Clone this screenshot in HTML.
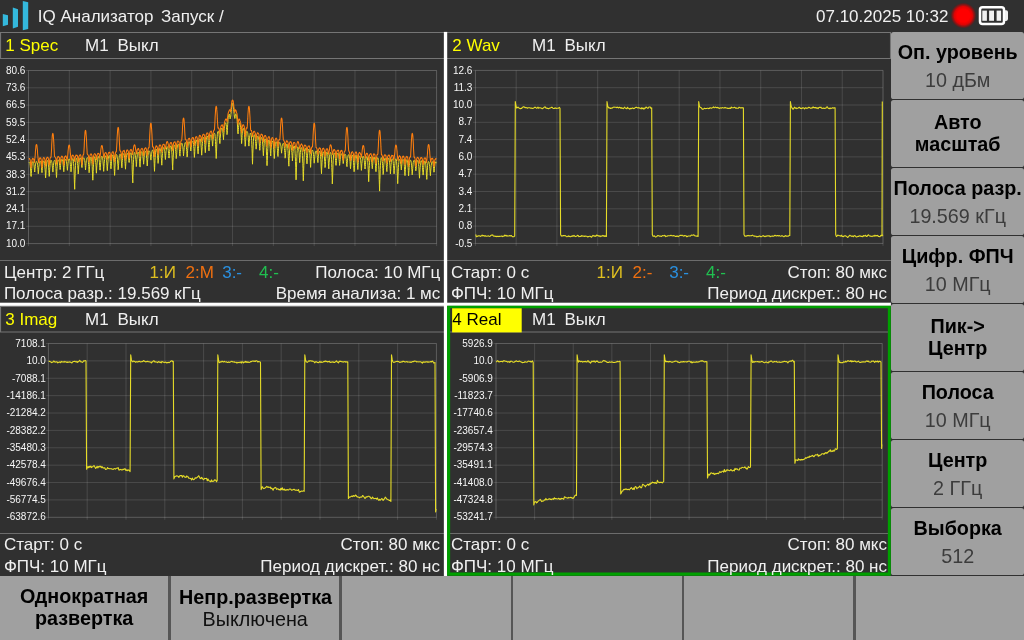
<!DOCTYPE html>
<html lang="ru"><head><meta charset="utf-8"><title>IQ Анализатор</title>
<style>
html,body{margin:0;padding:0;}
body{width:1024px;height:640px;background:#303030;overflow:hidden;position:relative;font-family:"Liberation Sans",sans-serif;color:#f0f0f0;}
div{position:absolute;box-sizing:border-box;white-space:nowrap;}
.plots{position:absolute;left:0;top:0;}
#wrap{left:0;top:0;width:1024px;height:640px;will-change:transform;}
.yl{font-size:10px;line-height:12px;text-align:right;color:#f6f6f6;}
.sb{left:891.1px;width:133.3px;height:66.3px;background:#a0a0a0;border-radius:2.6px;}
.bb{top:575.8px;width:168.6px;height:65px;background:#a0a0a0;}
.bbg{left:0;top:575.8px;width:1024px;height:65px;background:#565656;}
</style></head><body><div id="wrap">
<svg style="position:absolute;left:0;top:0" width="36" height="32" viewBox="0 0 36 32"><g fill="#34b8dc">
<polygon points="2.8,14 8,15.3 8,24.7 2.8,26.3"/><polygon points="12.8,7.5 18,9.2 18,26.8 12.8,28.5"/><polygon points="22.8,1 28.2,2.3 28.2,29 22.8,30.3"/></g></svg>
<div style="font-size:17px;line-height:22px;top:5.50px;color:#f0f0f0;left:37.80px;">IQ Анализатор</div>
<div style="font-size:17px;line-height:22px;top:5.50px;color:#f0f0f0;left:161.00px;">Запуск /</div>
<div style="font-size:17px;line-height:22px;top:5.50px;color:#f0f0f0;left:816.00px;">07.10.2025 10:32</div>
<svg style="position:absolute;left:940px;top:0" width="84" height="32" viewBox="940 0 84 32">
<defs><radialGradient id="rg"><stop offset="0" stop-color="#ff0000"/><stop offset="0.5" stop-color="#ff0000"/><stop offset="0.7" stop-color="#f00000" stop-opacity="0.9"/><stop offset="0.85" stop-color="#d00000" stop-opacity="0.5"/><stop offset="1" stop-color="#a00000" stop-opacity="0"/></radialGradient></defs>
<circle cx="963.4" cy="15.6" r="13" fill="url(#rg)"/>
<rect x="980" y="7.2" width="24" height="16.8" rx="2.5" fill="none" stroke="#fff" stroke-width="2.5"/>
<path d="M1005 10.3h1.2a1.8 1.8 0 0 1 1.8 1.8v7a1.8 1.8 0 0 1 -1.8 1.8h-1.2z" fill="#f0f0f0"/>
<rect x="982.3" y="10.6" width="4.6" height="10.2" fill="#f0f0f0"/><rect x="989.1" y="10.6" width="4.9" height="10.2" fill="#f0f0f0"/><rect x="996.6" y="10.6" width="4.5" height="10.2" fill="#f0f0f0"/>
</svg>
<svg class="plots" width="1024" height="640" viewBox="0 0 1024 640"><g fill="none" stroke="#757575" stroke-width="1.1"><path d="M446 32.5H0.55V58.5H446"/><path d="M446 32.5H890.5V58.5H446"/><path d="M446 306.5H0.55V332H446"/><path d="M889 332H450"/></g><g fill="none" stroke="#6c6c6c" stroke-width="1"><path d="M0 260.5H444M447 260.5H891M0 533.5H444M450 533.5H888"/></g><rect x="443.85" y="31.9" width="3.35" height="544.1" fill="#fff"/><rect x="0" y="302.7" width="890.9" height="3.15" fill="#fff"/><path fill="#00a000" fill-rule="evenodd" d="M447.1 305.85H890.8V575.7H447.1Z M450.15 308.3V572.6H887.85V308.3Z"/><rect x="452.1" y="308.3" width="69.6" height="24.1" fill="#ffff00"/></svg>
<svg class="plots" width="1024" height="640" viewBox="0 0 1024 640"><g stroke="#ffffff" stroke-opacity="0.125" stroke-width="1" fill="none"><line x1="28.50" y1="70.50" x2="28.50" y2="246.10"/><line x1="69.31" y1="70.50" x2="69.31" y2="246.10"/><line x1="110.12" y1="70.50" x2="110.12" y2="246.10"/><line x1="150.93" y1="70.50" x2="150.93" y2="246.10"/><line x1="191.74" y1="70.50" x2="191.74" y2="246.10"/><line x1="232.55" y1="70.50" x2="232.55" y2="246.10"/><line x1="273.36" y1="70.50" x2="273.36" y2="246.10"/><line x1="314.17" y1="70.50" x2="314.17" y2="246.10"/><line x1="354.98" y1="70.50" x2="354.98" y2="246.10"/><line x1="395.79" y1="70.50" x2="395.79" y2="246.10"/><line x1="436.60" y1="70.50" x2="436.60" y2="246.10"/><line x1="26.00" y1="70.50" x2="436.60" y2="70.50"/><line x1="26.00" y1="87.81" x2="436.60" y2="87.81"/><line x1="26.00" y1="105.12" x2="436.60" y2="105.12"/><line x1="26.00" y1="122.43" x2="436.60" y2="122.43"/><line x1="26.00" y1="139.74" x2="436.60" y2="139.74"/><line x1="26.00" y1="157.05" x2="436.60" y2="157.05"/><line x1="26.00" y1="174.36" x2="436.60" y2="174.36"/><line x1="26.00" y1="191.67" x2="436.60" y2="191.67"/><line x1="26.00" y1="208.98" x2="436.60" y2="208.98"/><line x1="26.00" y1="226.29" x2="436.60" y2="226.29"/><line x1="26.00" y1="243.60" x2="436.60" y2="243.60"/><rect x="28.50" y="70.50" width="408.10" height="173.10" stroke-opacity="0.11"/></g><polyline points="28.8,162.5 29.0,162.3 29.1,162.1 29.3,162.1 29.5,162.3 29.6,162.5 29.8,162.7 30.0,163.7 30.2,165.3 30.3,166.7 30.5,168.9 30.7,171.1 30.8,173.9 31.0,176.4 31.2,176.4 31.3,173.6 31.5,170.8 31.7,168.6 31.9,166.6 32.0,165.0 32.2,163.4 32.4,162.9 32.5,162.2 32.7,161.7 32.9,161.9 33.0,161.7 33.2,161.8 33.4,162.2 33.6,162.7 33.7,163.3 33.9,164.7 34.1,165.9 34.2,167.2 34.4,169.2 34.6,170.7 34.7,172.0 34.9,170.3 35.1,168.2 35.3,166.5 35.4,164.9 35.6,163.9 35.8,162.8 35.9,162.4 36.1,161.6 36.3,161.6 36.4,161.7 36.6,161.5 36.8,161.5 37.0,161.7 37.1,162.6 37.3,162.9 37.5,164.2 37.6,165.5 37.8,167.3 38.0,169.1 38.1,171.4 38.3,173.7 38.5,172.2 38.7,169.8 38.8,167.8 39.0,166.2 39.2,164.6 39.3,163.5 39.5,162.6 39.7,161.7 39.8,161.6 40.0,161.4 40.2,161.2 40.4,161.4 40.5,161.3 40.7,161.6 40.9,162.7 41.0,163.7 41.2,164.7 41.4,166.2 41.5,167.9 41.7,170.3 41.9,172.3 42.0,172.7 42.2,170.5 42.4,168.2 42.6,166.6 42.7,164.7 42.9,163.6 43.1,162.3 43.2,161.7 43.4,161.4 43.6,160.9 43.7,161.1 43.9,161.2 44.1,161.0 44.3,161.6 44.4,162.1 44.6,163.5 44.8,165.2 44.9,167.0 45.1,169.8 45.3,172.1 45.4,175.3 45.6,177.9 45.8,174.8 46.0,172.0 46.1,169.1 46.3,166.9 46.5,164.9 46.6,163.2 46.8,161.9 47.0,161.4 47.1,161.1 47.3,160.6 47.5,160.5 47.7,160.9 47.8,161.1 48.0,161.6 48.2,162.5 48.3,164.1 48.5,166.1 48.7,167.8 48.8,170.6 49.0,173.2 49.2,176.4 49.4,175.1 49.5,172.2 49.7,169.2 49.9,167.2 50.0,165.2 50.2,163.3 50.4,162.0 50.5,161.4 50.7,160.5 50.9,160.2 51.1,160.5 51.2,160.4 51.4,160.6 51.6,160.7 51.7,161.7 51.9,162.6 52.1,163.5 52.2,165.2 52.4,167.1 52.6,168.8 52.8,171.3 52.9,172.1 53.1,169.8 53.3,167.5 53.4,165.6 53.6,164.0 53.8,162.9 53.9,161.5 54.1,161.0 54.3,160.5 54.4,160.4 54.6,160.3 54.8,160.1 55.0,160.3 55.1,160.8 55.3,161.5 55.5,162.5 55.6,164.0 55.8,166.2 56.0,168.5 56.1,171.2 56.3,174.3 56.5,177.5 56.7,174.7 56.8,171.3 57.0,168.5 57.2,166.4 57.3,164.0 57.5,162.7 57.7,161.3 57.8,160.4 58.0,160.1 58.2,159.9 58.4,160.0 58.5,160.1 58.7,160.0 58.9,160.3 59.0,161.0 59.2,161.6 59.4,162.9 59.5,164.0 59.7,165.7 59.9,167.7 60.1,169.6 60.2,169.1 60.4,167.4 60.6,165.3 60.7,163.8 60.9,162.6 61.1,161.5 61.2,160.8 61.4,159.9 61.6,159.9 61.8,159.4 61.9,159.4 62.1,159.4 62.3,159.8 62.4,159.8 62.6,160.9 62.8,161.5 62.9,162.6 63.1,164.1 63.3,166.0 63.5,167.9 63.6,170.4 63.8,171.7 64.0,169.3 64.1,167.3 64.3,165.2 64.5,163.3 64.6,161.9 64.8,161.0 65.0,160.1 65.2,159.6 65.3,159.4 65.5,159.4 65.7,159.3 65.8,159.5 66.0,159.6 66.2,159.8 66.3,161.0 66.5,161.6 66.7,163.0 66.8,164.3 67.0,166.3 67.2,168.4 67.4,170.3 67.5,169.1 67.7,166.7 67.9,165.2 68.0,163.5 68.2,161.8 68.4,160.7 68.5,159.9 68.7,159.5 68.9,159.0 69.1,159.3 69.2,158.8 69.4,159.2 69.6,159.2 69.7,159.5 69.9,160.6 70.1,161.6 70.2,162.8 70.4,164.6 70.6,166.6 70.8,168.9 70.9,171.7 71.1,171.8 71.3,169.0 71.4,166.7 71.6,165.0 71.8,162.9 71.9,161.5 72.1,160.2 72.3,159.3 72.5,159.1 72.6,158.7 72.8,158.8 73.0,158.6 73.1,159.0 73.3,160.0 73.5,161.5 73.6,163.4 73.8,166.5 74.0,170.1 74.2,174.5 74.3,179.5 74.5,185.0 74.7,189.3 74.8,183.4 75.0,177.9 75.2,173.2 75.3,169.1 75.5,165.5 75.7,162.7 75.9,160.8 76.0,159.4 76.2,158.5 76.4,158.6 76.5,158.4 76.7,158.4 76.9,158.8 77.0,159.5 77.2,160.2 77.4,161.8 77.6,163.6 77.7,165.5 77.9,168.1 78.1,171.0 78.2,173.9 78.4,172.3 78.6,169.2 78.7,167.0 78.9,164.7 79.1,162.7 79.2,160.8 79.4,159.8 79.6,159.1 79.8,158.4 79.9,158.4 80.1,158.2 80.3,157.9 80.4,158.2 80.6,158.9 80.8,159.4 80.9,160.1 81.1,160.8 81.3,162.0 81.5,163.7 81.6,165.0 81.8,167.3 82.0,167.6 82.1,165.8 82.3,164.0 82.5,162.4 82.6,161.3 82.8,159.9 83.0,159.2 83.2,158.5 83.3,158.3 83.5,158.1 83.7,157.9 83.8,157.8 84.0,157.8 84.2,158.0 84.3,158.7 84.5,159.3 84.7,160.5 84.9,162.2 85.0,163.7 85.2,165.4 85.4,167.7 85.5,170.0 85.7,167.6 85.9,165.3 86.0,163.7 86.2,162.0 86.4,160.6 86.6,159.4 86.7,158.5 86.9,158.0 87.1,157.8 87.2,157.6 87.4,157.6 87.6,157.8 87.7,157.8 87.9,158.3 88.1,159.3 88.3,160.8 88.4,162.2 88.6,164.4 88.8,166.7 88.9,169.4 89.1,172.7 89.3,171.7 89.4,169.1 89.6,166.2 89.8,164.1 90.0,161.7 90.1,160.2 90.3,158.9 90.5,158.3 90.6,157.5 90.8,157.4 91.0,157.2 91.1,157.1 91.3,157.9 91.5,158.5 91.6,159.7 91.8,161.6 92.0,163.8 92.2,166.3 92.3,169.9 92.5,173.9 92.7,178.4 92.8,180.2 93.0,176.1 93.2,171.6 93.3,167.9 93.5,164.8 93.7,162.2 93.9,160.4 94.0,158.9 94.2,157.6 94.4,157.5 94.5,156.8 94.7,156.8 94.9,157.1 95.0,157.4 95.2,158.4 95.4,159.0 95.6,160.9 95.7,162.4 95.9,164.8 96.1,167.0 96.2,170.2 96.4,173.2 96.6,170.7 96.7,168.0 96.9,165.3 97.1,163.0 97.3,161.0 97.4,159.6 97.6,158.3 97.8,157.5 97.9,157.0 98.1,157.0 98.3,156.5 98.4,156.9 98.6,156.9 98.8,157.6 99.0,158.2 99.1,159.4 99.3,161.1 99.5,162.8 99.6,165.2 99.8,167.6 100.0,170.0 100.1,170.2 100.3,167.3 100.5,164.9 100.7,162.7 100.8,160.8 101.0,159.2 101.2,157.9 101.3,157.3 101.5,156.9 101.7,156.3 101.8,156.4 102.0,156.2 102.2,156.6 102.4,156.9 102.5,157.6 102.7,158.8 102.9,160.2 103.0,161.9 103.2,164.0 103.4,166.7 103.5,169.2 103.7,171.4 103.9,168.2 104.0,166.0 104.2,163.6 104.4,161.1 104.6,159.5 104.7,158.0 104.9,157.1 105.1,156.7 105.2,156.2 105.4,155.8 105.6,156.2 105.7,156.1 105.9,156.1 106.1,156.9 106.3,157.7 106.4,159.4 106.6,160.8 106.8,162.9 106.9,165.5 107.1,168.0 107.3,170.6 107.4,169.0 107.6,166.2 107.8,163.9 108.0,161.7 108.1,159.7 108.3,158.1 108.5,156.9 108.6,156.1 108.8,155.9 109.0,155.7 109.1,155.5 109.3,155.7 109.5,155.7 109.7,156.0 109.8,156.7 110.0,158.2 110.2,159.7 110.3,161.5 110.5,163.3 110.7,165.8 110.8,168.4 111.0,168.9 111.2,166.3 111.4,163.9 111.5,161.4 111.7,159.8 111.9,158.1 112.0,157.1 112.2,156.3 112.4,155.7 112.5,155.3 112.7,155.3 112.9,154.9 113.1,155.1 113.2,155.8 113.4,156.8 113.6,158.3 113.7,160.1 113.9,162.1 114.1,165.2 114.2,168.3 114.4,171.7 114.6,175.4 114.8,171.7 114.9,167.8 115.1,165.0 115.3,161.8 115.4,159.4 115.6,157.7 115.8,156.5 115.9,155.6 116.1,155.1 116.3,154.6 116.4,154.6 116.6,154.6 116.8,154.9 117.0,155.6 117.1,156.9 117.3,158.0 117.5,159.6 117.6,162.0 117.8,164.2 118.0,166.7 118.1,169.7 118.3,168.9 118.5,165.8 118.7,163.2 118.8,160.8 119.0,158.9 119.2,157.5 119.3,155.8 119.5,155.3 119.7,154.6 119.8,154.2 120.0,154.2 120.2,154.2 120.4,154.4 120.5,154.8 120.7,155.8 120.9,156.6 121.0,157.9 121.2,160.0 121.4,161.9 121.5,163.9 121.7,166.7 121.9,167.8 122.1,164.9 122.2,162.5 122.4,160.3 122.6,158.3 122.7,157.0 122.9,155.5 123.1,154.8 123.2,154.3 123.4,154.0 123.6,154.0 123.8,153.6 123.9,153.8 124.1,154.4 124.3,154.9 124.4,155.8 124.6,157.2 124.8,158.9 124.9,161.4 125.1,163.5 125.3,166.3 125.5,169.2 125.6,166.8 125.8,163.9 126.0,161.4 126.1,159.3 126.3,157.3 126.5,155.7 126.6,155.1 126.8,154.3 127.0,153.6 127.2,153.6 127.3,153.6 127.5,153.4 127.7,153.5 127.8,153.8 128.0,154.7 128.2,155.5 128.3,156.3 128.5,157.8 128.7,159.1 128.8,160.7 129.0,162.5 129.2,162.4 129.4,160.5 129.5,159.0 129.7,157.5 129.9,156.1 130.0,155.0 130.2,154.1 130.4,153.8 130.5,153.3 130.7,153.1 130.9,152.8 131.1,153.3 131.2,153.3 131.4,154.3 131.6,155.6 131.7,158.2 131.9,161.1 132.1,164.5 132.2,169.1 132.4,174.2 132.6,179.6 132.8,182.9 132.9,177.1 133.1,171.9 133.3,167.1 133.4,162.9 133.6,159.4 133.8,156.7 133.9,155.1 134.1,153.7 134.3,152.7 134.5,152.6 134.6,152.8 134.8,152.6 135.0,153.0 135.1,153.4 135.3,154.6 135.5,155.6 135.6,157.1 135.8,159.2 136.0,161.2 136.2,163.6 136.3,166.6 136.5,164.9 136.7,161.9 136.8,159.6 137.0,157.9 137.2,156.0 137.3,154.7 137.5,153.5 137.7,152.6 137.9,152.2 138.0,152.2 138.2,152.3 138.4,152.4 138.5,152.4 138.7,152.9 138.9,153.9 139.0,155.2 139.2,156.8 139.4,158.8 139.6,161.1 139.7,163.9 139.9,166.6 140.1,167.1 140.2,164.0 140.4,161.1 140.6,159.0 140.7,156.6 140.9,155.1 141.1,153.8 141.2,152.8 141.4,152.2 141.6,152.1 141.8,151.6 141.9,151.8 142.1,152.0 142.3,152.4 142.4,152.6 142.6,153.4 142.8,154.9 142.9,156.3 143.1,158.0 143.3,160.2 143.5,162.5 143.6,164.2 143.8,161.8 144.0,159.6 144.1,157.5 144.3,155.8 144.5,154.3 144.6,153.4 144.8,152.4 145.0,152.0 145.2,151.6 145.3,151.3 145.5,151.2 145.7,151.2 145.8,151.6 146.0,152.4 146.2,153.3 146.3,154.7 146.5,156.0 146.7,158.4 146.9,160.9 147.0,163.1 147.2,166.0 147.4,165.2 147.5,162.1 147.7,159.5 147.9,157.4 148.0,155.5 148.2,154.0 148.4,152.4 148.6,151.8 148.7,151.0 148.9,151.0 149.1,151.1 149.2,150.8 149.4,151.0 149.6,151.4 149.7,151.6 149.9,152.4 150.1,153.4 150.3,154.8 150.4,156.1 150.6,157.6 150.8,159.2 150.9,160.1 151.1,157.9 151.3,156.5 151.4,154.7 151.6,153.7 151.8,152.2 152.0,151.3 152.1,151.1 152.3,150.3 152.5,150.3 152.6,150.1 152.8,150.2 153.0,150.3 153.1,150.8 153.3,151.7 153.5,153.2 153.6,154.8 153.8,157.4 154.0,160.0 154.2,163.7 154.3,167.1 154.5,171.3 154.7,167.3 154.8,163.9 155.0,160.4 155.2,157.4 155.3,154.9 155.5,152.8 155.7,151.0 155.9,150.2 156.0,149.5 156.2,149.1 156.4,149.4 156.5,149.6 156.7,149.8 156.9,150.0 157.0,150.8 157.2,152.2 157.4,153.5 157.6,155.8 157.7,158.1 157.9,160.5 158.1,163.4 158.2,162.5 158.4,160.0 158.6,157.2 158.7,155.0 158.9,153.3 159.1,151.5 159.3,150.4 159.4,149.2 159.6,148.6 159.8,148.8 159.9,148.7 160.1,148.6 160.3,148.7 160.4,149.0 160.6,149.7 160.8,151.4 161.0,153.1 161.1,154.8 161.3,157.5 161.5,160.3 161.6,163.4 161.8,165.2 162.0,161.9 162.1,158.6 162.3,155.9 162.5,153.5 162.7,151.6 162.8,150.1 163.0,149.2 163.2,148.5 163.3,147.9 163.5,147.6 163.7,147.7 163.8,147.7 164.0,147.9 164.2,148.6 164.4,149.3 164.5,150.3 164.7,151.5 164.9,153.1 165.0,155.0 165.2,157.2 165.4,159.5 165.5,157.9 165.7,155.5 165.9,153.4 166.0,151.8 166.2,150.3 166.4,149.2 166.6,148.0 166.7,147.3 166.9,147.2 167.1,146.6 167.2,146.6 167.4,146.9 167.6,147.1 167.7,147.3 167.9,147.8 168.1,149.0 168.3,150.4 168.4,152.0 168.6,153.5 168.8,155.5 168.9,158.0 169.1,158.1 169.3,155.5 169.4,153.3 169.6,151.4 169.8,149.8 170.0,148.6 170.1,147.4 170.3,146.6 170.5,146.6 170.6,146.1 170.8,145.8 171.0,146.1 171.1,146.1 171.3,146.8 171.5,148.0 171.7,149.8 171.8,152.2 172.0,154.7 172.2,158.0 172.3,162.0 172.5,166.4 172.7,169.9 172.8,165.4 173.0,161.1 173.2,157.4 173.4,154.0 173.5,151.0 173.7,148.7 173.9,147.3 174.0,146.2 174.2,145.6 174.4,145.2 174.5,144.9 174.7,145.1 174.9,145.3 175.1,146.1 175.2,146.9 175.4,147.8 175.6,149.7 175.7,151.5 175.9,153.5 176.1,156.0 176.2,158.6 176.4,157.4 176.6,154.7 176.8,152.5 176.9,150.3 177.1,148.3 177.3,147.1 177.4,145.9 177.6,144.9 177.8,144.7 177.9,144.6 178.1,144.3 178.3,144.4 178.4,144.3 178.6,144.6 178.8,145.4 179.0,146.7 179.1,147.5 179.3,149.2 179.5,151.2 179.6,153.4 179.8,155.8 180.0,156.2 180.1,153.5 180.3,151.4 180.5,149.7 180.7,147.7 180.8,146.1 181.0,145.4 181.2,144.6 181.3,144.0 181.5,143.5 181.7,143.6 181.8,143.3 182.0,143.5 182.2,143.6 182.4,144.3 182.5,145.4 182.7,146.5 182.9,147.8 183.0,149.5 183.2,151.3 183.4,153.4 183.5,155.9 183.7,153.7 183.9,151.3 184.1,149.0 184.2,147.3 184.4,145.9 184.6,144.6 184.7,143.7 184.9,143.2 185.1,143.1 185.2,142.6 185.4,142.6 185.6,142.9 185.8,143.0 185.9,143.6 186.1,144.5 186.3,145.9 186.4,147.1 186.6,149.4 186.8,151.5 186.9,154.2 187.1,157.1 187.3,156.3 187.5,153.7 187.6,150.7 187.8,148.3 188.0,146.4 188.1,145.0 188.3,143.7 188.5,142.8 188.6,142.3 188.8,141.9 189.0,142.0 189.2,141.8 189.3,141.8 189.5,142.1 189.7,142.9 189.8,143.5 190.0,144.3 190.2,145.4 190.3,146.9 190.5,148.1 190.7,149.9 190.8,151.0 191.0,149.2 191.2,147.6 191.4,145.9 191.5,144.6 191.7,143.4 191.9,142.4 192.0,141.8 192.2,141.6 192.4,141.4 192.5,141.3 192.7,141.1 192.9,141.0 193.1,141.3 193.2,142.4 193.4,143.0 193.6,144.6 193.7,146.6 193.9,148.6 194.1,151.4 194.2,154.0 194.4,157.4 194.6,154.9 194.8,151.6 194.9,148.9 195.1,146.6 195.3,144.7 195.4,143.2 195.6,141.9 195.8,141.0 195.9,140.4 196.1,140.1 196.3,140.3 196.5,140.2 196.6,140.7 196.8,141.0 197.0,142.0 197.1,142.9 197.3,144.5 197.5,146.3 197.6,148.9 197.8,151.0 198.0,153.9 198.2,153.8 198.3,151.2 198.5,148.4 198.7,145.8 198.8,144.1 199.0,142.4 199.2,140.7 199.3,139.9 199.5,139.5 199.7,139.2 199.9,139.0 200.0,139.1 200.2,138.8 200.4,139.2 200.5,140.2 200.7,141.2 200.9,143.1 201.0,145.2 201.2,147.3 201.4,150.1 201.6,153.1 201.7,155.2 201.9,151.9 202.1,149.1 202.2,146.4 202.4,143.8 202.6,141.6 202.7,140.4 202.9,138.9 203.1,138.4 203.2,137.9 203.4,137.5 203.6,137.5 203.8,137.5 203.9,137.7 204.1,138.3 204.3,139.5 204.4,140.9 204.6,142.3 204.8,144.5 204.9,146.9 205.1,150.2 205.3,152.7 205.5,151.1 205.6,147.9 205.8,145.4 206.0,143.0 206.1,140.9 206.3,139.4 206.5,137.9 206.6,137.3 206.8,136.7 207.0,136.2 207.2,136.2 207.3,136.0 207.5,136.6 207.7,137.1 207.8,137.7 208.0,138.8 208.2,140.5 208.3,142.3 208.5,144.4 208.7,147.3 208.9,150.1 209.0,150.9 209.2,147.6 209.4,144.6 209.5,142.5 209.7,140.4 209.9,138.2 210.0,137.0 210.2,136.0 210.4,135.5 210.6,135.1 210.7,134.9 210.9,135.0 211.1,135.0 211.2,134.9 211.4,135.8 211.6,136.5 211.7,137.5 211.9,138.8 212.1,140.5 212.3,141.9 212.4,144.3 212.6,146.1 212.8,143.8 212.9,141.9 213.1,139.7 213.3,137.9 213.4,136.3 213.6,135.3 213.8,134.2 214.0,133.8 214.1,133.6 214.3,133.2 214.5,133.2 214.6,133.5 214.8,133.7 215.0,134.6 215.1,136.2 215.3,138.4 215.5,141.6 215.6,144.7 215.8,148.9 216.0,153.8 216.2,158.5 216.3,156.9 216.5,151.9 216.7,147.0 216.8,143.0 217.0,139.5 217.2,136.8 217.3,134.7 217.5,133.2 217.7,131.9 217.9,131.5 218.0,131.5 218.2,131.4 218.4,131.2 218.5,131.4 218.7,132.1 218.9,133.3 219.0,134.3 219.2,136.0 219.4,137.9 219.6,140.3 219.7,142.9 219.9,143.6 220.1,140.9 220.2,138.5 220.4,136.0 220.6,133.9 220.7,132.3 220.9,130.9 221.1,129.8 221.3,129.3 221.4,128.5 221.6,128.3 221.8,128.6 221.9,128.2 222.1,128.2 222.3,128.7 222.4,129.8 222.6,130.4 222.8,131.8 223.0,133.5 223.1,135.0 223.3,137.2 223.5,139.7 223.6,137.2 223.8,134.6 224.0,132.4 224.1,130.4 224.3,128.3 224.5,126.7 224.7,125.5 224.8,124.6 225.0,124.2 225.2,123.8 225.3,123.2 225.5,122.8 225.7,123.0 225.8,122.9 226.0,123.5 226.2,124.5 226.4,126.3 226.5,127.8 226.7,129.6 226.9,132.3 227.0,134.6 227.2,133.6 227.4,130.5 227.5,127.2 227.7,124.4 227.9,121.9 228.0,119.6 228.2,117.8 228.4,116.8 228.6,115.7 228.7,114.9 228.9,114.5 229.1,114.0 229.2,114.1 229.4,114.2 229.6,114.9 229.7,115.8 229.9,117.8 230.1,118.9 230.3,118.5 230.4,117.9 230.6,117.1 230.8,116.0 230.9,114.6 231.1,113.1 231.3,111.4 231.4,109.6 231.6,107.9 231.8,106.4 232.0,105.1 232.1,104.3 232.3,103.7 232.5,103.5 232.6,103.5 232.8,103.7 233.0,104.3 233.1,105.1 233.3,106.4 233.5,107.9 233.7,109.6 233.8,111.4 234.0,113.1 234.2,114.6 234.3,116.0 234.5,117.1 234.7,117.9 234.8,118.5 235.0,118.0 235.2,116.1 235.4,114.8 235.5,114.3 235.7,113.9 235.9,113.8 236.0,113.8 236.2,114.6 236.4,115.0 236.5,115.7 236.7,116.8 236.9,117.9 237.1,119.6 237.2,121.5 237.4,124.0 237.6,127.0 237.7,130.0 237.9,133.1 238.1,133.9 238.2,131.7 238.4,129.6 238.6,127.4 238.7,125.6 238.9,124.8 239.1,123.8 239.3,123.2 239.4,122.7 239.6,122.9 239.8,123.1 239.9,123.4 240.1,124.1 240.3,124.9 240.4,126.0 240.6,127.4 240.8,129.3 241.0,131.9 241.1,134.2 241.3,137.5 241.5,140.8 241.6,143.6 241.8,140.5 242.0,137.9 242.1,135.4 242.3,133.1 242.5,131.3 242.7,130.2 242.8,128.9 243.0,128.6 243.2,128.5 243.3,128.5 243.5,128.5 243.7,128.8 243.8,129.0 244.0,130.0 244.2,131.0 244.4,132.9 244.5,134.6 244.7,137.1 244.9,139.9 245.0,142.8 245.2,146.3 245.4,144.9 245.5,141.9 245.7,139.5 245.9,137.1 246.1,134.9 246.2,133.5 246.4,132.6 246.6,131.8 246.7,131.4 246.9,131.5 247.1,131.3 247.2,131.6 247.4,131.8 247.6,132.4 247.8,133.2 247.9,134.3 248.1,135.8 248.3,137.7 248.4,139.9 248.6,142.7 248.8,145.0 248.9,146.1 249.1,143.4 249.3,141.1 249.5,138.8 249.6,137.1 249.8,135.6 250.0,134.7 250.1,133.6 250.3,133.4 250.5,133.0 250.6,133.4 250.8,133.2 251.0,133.8 251.1,134.6 251.3,135.8 251.5,138.1 251.7,140.7 251.8,144.3 252.0,148.5 252.2,153.0 252.3,158.6 252.5,164.2 252.7,158.8 252.8,153.7 253.0,149.0 253.2,145.1 253.4,141.6 253.5,138.9 253.7,137.2 253.9,135.6 254.0,135.2 254.2,134.9 254.4,134.7 254.5,135.1 254.7,135.5 254.9,136.0 255.1,137.1 255.2,138.3 255.4,139.7 255.6,141.5 255.7,143.7 255.9,146.3 256.1,149.2 256.2,148.9 256.4,146.0 256.6,143.8 256.8,141.5 256.9,140.1 257.1,138.8 257.3,137.3 257.4,136.6 257.6,136.5 257.8,136.2 257.9,136.1 258.1,136.5 258.3,136.7 258.5,136.9 258.6,137.7 258.8,139.1 259.0,140.5 259.1,141.9 259.3,144.0 259.5,146.5 259.6,148.7 259.8,150.3 260.0,147.7 260.2,145.4 260.3,143.3 260.5,141.6 260.7,140.4 260.8,139.3 261.0,138.2 261.2,137.6 261.3,137.6 261.5,137.6 261.7,137.7 261.9,137.8 262.0,138.5 262.2,138.9 262.4,140.3 262.5,141.7 262.7,144.2 262.9,146.6 263.0,149.2 263.2,152.5 263.4,155.7 263.5,153.6 263.7,150.4 263.9,147.5 264.1,145.1 264.2,143.2 264.4,141.3 264.6,140.2 264.7,139.3 264.9,139.0 265.1,139.1 265.2,138.9 265.4,139.2 265.6,139.4 265.8,140.4 265.9,142.2 266.1,144.7 266.3,147.4 266.4,151.0 266.6,155.6 266.8,160.3 266.9,165.3 267.1,165.7 267.3,160.4 267.5,155.8 267.6,151.8 267.8,148.5 268.0,145.3 268.1,143.0 268.3,141.7 268.5,140.9 268.6,140.5 268.8,140.1 269.0,140.5 269.2,140.3 269.3,140.8 269.5,141.8 269.7,142.9 269.8,144.3 270.0,146.2 270.2,148.2 270.3,151.0 270.5,153.5 270.7,156.0 270.9,153.2 271.0,150.4 271.2,147.8 271.4,146.1 271.5,144.5 271.7,142.9 271.9,142.3 272.0,141.2 272.2,141.2 272.4,141.2 272.6,141.3 272.7,141.0 272.9,141.8 273.1,142.5 273.2,143.7 273.4,145.1 273.6,146.8 273.7,149.4 273.9,152.2 274.1,155.0 274.3,158.5 274.4,157.0 274.6,153.9 274.8,150.9 274.9,148.5 275.1,146.5 275.3,144.8 275.4,143.2 275.6,142.5 275.8,141.9 275.9,141.8 276.1,141.7 276.3,141.8 276.5,142.3 276.6,142.7 276.8,143.4 277.0,144.5 277.1,146.2 277.3,148.3 277.5,150.4 277.6,152.9 277.8,155.7 278.0,156.5 278.2,153.3 278.3,151.2 278.5,148.7 278.7,146.9 278.8,145.3 279.0,144.4 279.2,143.2 279.3,143.0 279.5,142.6 279.7,142.8 279.9,142.6 280.0,142.6 280.2,143.4 280.4,143.5 280.5,144.3 280.7,145.1 280.9,146.3 281.0,147.8 281.2,149.2 281.4,151.0 281.6,153.2 281.7,151.2 281.9,149.8 282.1,148.3 282.2,146.5 282.4,145.7 282.6,144.7 282.7,143.9 282.9,143.9 283.1,143.5 283.3,143.4 283.4,143.5 283.6,143.5 283.8,144.0 283.9,144.5 284.1,145.7 284.3,146.9 284.4,148.6 284.6,150.7 284.8,152.6 285.0,155.5 285.1,158.2 285.3,157.5 285.5,154.8 285.6,152.4 285.8,150.3 286.0,148.2 286.1,146.9 286.3,145.8 286.5,144.9 286.7,144.3 286.8,144.5 287.0,144.1 287.2,144.5 287.3,144.8 287.5,145.5 287.7,146.9 287.8,148.6 288.0,150.4 288.2,153.4 288.3,156.7 288.5,160.3 288.7,164.5 288.9,166.2 289.0,162.3 289.2,158.4 289.4,155.2 289.5,152.0 289.7,150.0 289.9,148.0 290.0,146.7 290.2,145.9 290.4,145.3 290.6,145.1 290.7,144.9 290.9,145.2 291.1,145.9 291.2,146.5 291.4,147.6 291.6,148.9 291.7,150.6 291.9,152.7 292.1,155.6 292.3,158.2 292.4,160.9 292.6,158.7 292.8,155.9 292.9,153.5 293.1,151.5 293.3,149.6 293.4,148.4 293.6,147.0 293.8,146.3 294.0,146.3 294.1,146.1 294.3,146.1 294.5,146.1 294.6,146.9 294.8,148.0 295.0,150.2 295.1,153.1 295.3,156.7 295.5,161.7 295.7,167.2 295.8,172.9 296.0,179.9 296.2,179.2 296.3,173.0 296.5,167.1 296.7,161.6 296.8,157.3 297.0,153.7 297.2,150.7 297.4,148.7 297.5,147.7 297.7,146.8 297.9,146.9 298.0,147.0 298.2,147.2 298.4,147.7 298.5,148.2 298.7,149.7 298.9,151.1 299.1,152.8 299.2,155.0 299.4,157.9 299.6,160.3 299.7,162.7 299.9,159.6 300.1,157.3 300.2,154.8 300.4,152.6 300.6,151.0 300.7,149.6 300.9,148.4 301.1,148.0 301.3,147.8 301.4,147.6 301.6,147.9 301.8,147.9 301.9,148.7 302.1,150.1 302.3,152.5 302.4,155.4 302.6,158.9 302.8,163.3 303.0,168.7 303.1,174.7 303.3,180.8 303.5,177.5 303.6,171.5 303.8,165.7 304.0,161.1 304.1,157.3 304.3,154.1 304.5,151.3 304.7,149.7 304.8,148.9 305.0,148.5 305.2,148.4 305.3,148.8 305.5,148.7 305.7,149.5 305.8,150.5 306.0,151.4 306.2,153.0 306.4,155.4 306.5,157.5 306.7,160.2 306.9,163.5 307.0,163.9 307.2,161.0 307.4,158.6 307.5,155.9 307.7,153.8 307.9,152.3 308.1,151.0 308.2,150.3 308.4,149.8 308.6,149.2 308.7,149.3 308.9,149.6 309.1,149.4 309.2,149.9 309.4,150.9 309.6,152.4 309.8,153.7 309.9,155.9 310.1,158.2 310.3,161.0 310.4,164.2 310.6,167.4 310.8,164.3 310.9,161.1 311.1,158.5 311.3,156.2 311.5,153.8 311.6,152.6 311.8,151.3 312.0,150.6 312.1,150.0 312.3,150.2 312.5,150.3 312.6,150.2 312.8,150.7 313.0,151.3 313.1,151.9 313.3,153.0 313.5,154.4 313.7,156.5 313.8,158.3 314.0,160.8 314.2,163.2 314.3,162.5 314.5,159.9 314.7,158.0 314.8,156.2 315.0,154.6 315.2,153.0 315.4,152.0 315.5,151.5 315.7,151.2 315.9,151.0 316.0,150.8 316.2,150.9 316.4,151.0 316.5,151.7 316.7,152.3 316.9,153.0 317.1,154.5 317.2,155.7 317.4,157.4 317.6,159.1 317.7,161.4 317.9,162.6 318.1,160.4 318.2,158.5 318.4,156.2 318.6,155.1 318.8,153.7 318.9,152.9 319.1,152.2 319.3,151.6 319.4,151.5 319.6,151.6 319.8,151.2 319.9,151.4 320.1,152.1 320.3,153.0 320.5,154.6 320.6,156.7 320.8,159.3 321.0,162.0 321.1,166.0 321.3,169.5 321.5,173.7 321.6,170.5 321.8,166.2 322.0,162.7 322.2,159.6 322.3,157.0 322.5,155.2 322.7,153.4 322.8,152.7 323.0,152.0 323.2,151.9 323.3,152.0 323.5,152.1 323.7,152.2 323.9,152.9 324.0,153.7 324.2,155.1 324.4,156.9 324.5,159.0 324.7,161.7 324.9,164.5 325.0,167.6 325.2,167.2 325.4,164.1 325.5,161.5 325.7,158.8 325.9,156.7 326.1,155.1 326.2,153.9 326.4,152.8 326.6,152.5 326.7,152.1 326.9,152.1 327.1,152.3 327.2,152.6 327.4,152.8 327.6,153.9 327.8,154.7 327.9,156.8 328.1,158.5 328.3,160.9 328.4,163.7 328.6,166.6 328.8,168.8 328.9,165.8 329.1,162.6 329.3,160.0 329.5,157.8 329.6,156.1 329.8,154.5 330.0,153.6 330.1,153.1 330.3,152.5 330.5,152.5 330.6,152.6 330.8,152.8 331.0,153.6 331.2,154.7 331.3,156.9 331.5,159.8 331.7,163.4 331.8,167.4 332.0,172.5 332.2,177.8 332.3,183.9 332.5,180.0 332.7,174.2 332.9,169.0 333.0,164.7 333.2,160.8 333.4,158.0 333.5,156.0 333.7,154.3 333.9,153.4 334.0,153.2 334.2,153.2 334.4,153.2 334.6,153.4 334.7,153.7 334.9,154.4 335.1,155.6 335.2,156.7 335.4,158.3 335.6,160.3 335.7,162.8 335.9,165.3 336.1,165.4 336.3,163.1 336.4,160.6 336.6,158.8 336.8,157.3 336.9,155.9 337.1,154.8 337.3,154.3 337.4,153.6 337.6,153.6 337.8,153.4 337.9,153.7 338.1,153.4 338.3,154.0 338.5,154.7 338.6,155.5 338.8,156.3 339.0,157.9 339.1,159.6 339.3,161.5 339.5,163.6 339.6,165.4 339.8,163.5 340.0,161.6 340.2,159.5 340.3,157.8 340.5,156.4 340.7,155.7 340.8,154.9 341.0,154.0 341.2,154.1 341.3,154.0 341.5,153.8 341.7,154.0 341.9,154.1 342.0,154.5 342.2,155.2 342.4,156.2 342.5,157.1 342.7,158.3 342.9,160.3 343.0,161.7 343.2,163.6 343.4,163.1 343.6,161.1 343.7,159.7 343.9,158.3 344.1,156.7 344.2,156.0 344.4,155.1 344.6,154.6 344.7,154.3 344.9,154.3 345.1,154.4 345.3,154.2 345.4,154.5 345.6,154.8 345.8,155.5 345.9,156.5 346.1,158.2 346.3,159.6 346.4,161.6 346.6,163.6 346.8,166.1 347.0,166.7 347.1,164.6 347.3,162.2 347.5,160.3 347.6,158.5 347.8,157.4 348.0,156.0 348.1,155.2 348.3,155.2 348.5,154.8 348.7,154.7 348.8,154.8 349.0,154.9 349.2,155.1 349.3,155.7 349.5,156.8 349.7,158.2 349.8,159.5 350.0,161.4 350.2,164.0 350.3,166.3 350.5,168.7 350.7,166.3 350.9,164.2 351.0,161.8 351.2,160.1 351.4,158.4 351.5,156.9 351.7,156.1 351.9,155.5 352.0,155.1 352.2,155.3 352.4,155.3 352.6,155.4 352.7,155.8 352.9,156.2 353.1,157.1 353.2,158.9 353.4,160.8 353.6,162.8 353.7,165.4 353.9,168.7 354.1,171.7 354.3,171.0 354.4,167.9 354.6,165.2 354.8,162.6 354.9,160.2 355.1,158.5 355.3,157.3 355.4,156.3 355.6,155.6 355.8,155.4 356.0,155.7 356.1,155.6 356.3,155.5 356.5,156.4 356.6,157.0 356.8,158.1 357.0,159.6 357.1,161.0 357.3,163.2 357.5,165.5 357.7,168.2 357.8,169.5 358.0,167.2 358.2,164.7 358.3,162.4 358.5,160.5 358.7,159.2 358.8,157.8 359.0,156.8 359.2,156.2 359.4,156.1 359.5,156.0 359.7,156.1 359.9,156.3 360.0,156.6 360.2,157.3 360.4,158.0 360.5,159.4 360.7,160.7 360.9,163.1 361.1,165.0 361.2,167.5 361.4,170.4 361.6,168.5 361.7,166.0 361.9,163.4 362.1,161.8 362.2,159.9 362.4,158.7 362.6,157.8 362.7,156.7 362.9,156.4 363.1,156.6 363.3,156.3 363.4,156.4 363.6,156.7 363.8,157.0 363.9,157.9 364.1,158.9 364.3,160.6 364.4,162.2 364.6,164.0 364.8,166.7 365.0,169.0 365.1,169.0 365.3,166.6 365.5,164.6 365.6,162.1 365.8,160.5 366.0,159.1 366.1,158.4 366.3,157.4 366.5,157.2 366.7,156.7 366.8,156.9 367.0,156.8 367.2,157.1 367.3,157.8 367.5,159.0 367.7,160.7 367.8,162.9 368.0,165.8 368.2,169.3 368.4,173.5 368.5,178.1 368.7,181.7 368.9,176.9 369.0,172.8 369.2,168.7 369.4,165.4 369.5,162.8 369.7,160.5 369.9,158.7 370.1,157.9 370.2,157.1 370.4,157.2 370.6,157.1 370.7,157.4 370.9,157.5 371.1,158.0 371.2,158.5 371.4,159.9 371.6,160.9 371.8,162.8 371.9,164.7 372.1,166.5 372.3,168.7 372.4,167.5 372.6,165.4 372.8,163.5 372.9,161.7 373.1,160.7 373.3,159.1 373.5,158.3 373.6,157.7 373.8,157.6 374.0,157.1 374.1,157.3 374.3,157.4 374.5,157.5 374.6,158.0 374.8,159.1 375.0,160.1 375.1,161.8 375.3,163.2 375.5,165.5 375.7,168.0 375.8,171.1 376.0,171.7 376.2,168.8 376.3,166.3 376.5,164.0 376.7,162.0 376.8,160.6 377.0,159.3 377.2,158.6 377.4,157.9 377.5,157.8 377.7,157.8 377.9,157.8 378.0,157.9 378.2,159.1 378.4,160.3 378.5,162.6 378.7,165.4 378.9,169.6 379.1,174.1 379.2,179.4 379.4,184.9 379.6,191.1 379.7,184.8 379.9,179.4 380.1,174.2 380.2,169.6 380.4,165.8 380.6,162.9 380.8,160.7 380.9,159.0 381.1,158.2 381.3,157.7 381.4,157.9 381.6,157.9 381.8,158.1 381.9,158.8 382.1,159.9 382.3,161.5 382.5,163.4 382.6,165.5 382.8,168.4 383.0,171.3 383.1,174.5 383.3,173.7 383.5,170.3 383.6,167.8 383.8,164.8 384.0,162.7 384.2,161.3 384.3,160.1 384.5,158.9 384.7,158.5 384.8,158.4 385.0,158.1 385.2,158.2 385.3,158.6 385.5,159.0 385.7,159.5 385.9,160.4 386.0,161.9 386.2,163.5 386.4,165.7 386.5,167.6 386.7,170.2 386.9,171.6 387.0,169.2 387.2,166.6 387.4,164.5 387.5,162.7 387.7,161.3 387.9,160.3 388.1,159.2 388.2,159.0 388.4,158.7 388.6,158.3 388.7,158.2 388.9,158.4 389.1,159.2 389.2,159.4 389.4,160.5 389.6,162.1 389.8,164.0 389.9,165.6 390.1,168.2 390.3,171.0 390.4,173.9 390.6,171.4 390.8,168.8 390.9,166.6 391.1,164.5 391.3,162.5 391.5,161.2 391.6,160.1 391.8,159.3 392.0,158.9 392.1,158.9 392.3,158.8 392.5,158.9 392.6,159.2 392.8,159.5 393.0,160.6 393.2,161.8 393.3,163.4 393.5,165.7 393.7,168.2 393.8,170.8 394.0,173.9 394.2,173.5 394.3,170.8 394.5,168.0 394.7,165.4 394.9,163.7 395.0,162.0 395.2,160.7 395.4,159.7 395.5,159.5 395.7,158.9 395.9,159.0 396.0,158.8 396.2,159.2 396.4,159.9 396.6,161.5 396.7,163.0 396.9,165.7 397.1,168.5 397.2,172.0 397.4,175.9 397.6,180.5 397.7,183.7 397.9,179.3 398.1,174.8 398.3,171.2 398.4,167.4 398.6,164.6 398.8,162.6 398.9,161.2 399.1,159.8 399.3,159.5 399.4,159.5 399.6,159.4 399.8,159.6 399.9,159.6 400.1,160.0 400.3,160.6 400.5,161.6 400.6,163.1 400.8,164.4 401.0,166.2 401.1,167.8 401.3,169.9 401.5,168.6 401.6,166.9 401.8,165.0 402.0,163.5 402.2,162.4 402.3,161.5 402.5,160.7 402.7,160.1 402.8,159.5 403.0,159.7 403.2,159.6 403.3,159.6 403.5,160.1 403.7,160.4 403.9,161.6 404.0,162.9 404.2,164.4 404.4,166.6 404.5,169.1 404.7,171.8 404.9,174.9 405.0,175.6 405.2,172.5 405.4,169.7 405.6,167.0 405.7,164.7 405.9,163.1 406.1,162.0 406.2,160.8 406.4,160.3 406.6,159.8 406.7,160.0 406.9,160.1 407.1,160.2 407.3,160.4 407.4,161.1 407.6,162.3 407.8,163.8 407.9,165.4 408.1,167.6 408.3,170.5 408.4,173.3 408.6,175.8 408.8,172.7 409.0,170.2 409.1,167.6 409.3,165.6 409.5,163.6 409.6,162.3 409.8,161.4 410.0,160.7 410.1,160.1 410.3,160.1 410.5,160.3 410.7,160.3 410.8,160.4 411.0,161.0 411.2,162.1 411.3,163.1 411.5,165.2 411.7,167.1 411.8,169.2 412.0,171.6 412.2,174.8 412.3,173.5 412.5,171.0 412.7,168.6 412.9,166.1 413.0,164.6 413.2,162.7 413.4,162.1 413.5,161.1 413.7,160.7 413.9,160.6 414.0,160.6 414.2,160.3 414.4,160.4 414.6,161.1 414.7,161.4 414.9,162.4 415.1,163.6 415.2,165.0 415.4,166.4 415.6,168.5 415.7,170.4 415.9,170.9 416.1,169.2 416.3,167.2 416.4,165.3 416.6,164.0 416.8,162.8 416.9,162.2 417.1,161.5 417.3,160.8 417.4,160.7 417.6,160.4 417.8,160.5 418.0,160.8 418.1,161.1 418.3,162.2 418.5,163.5 418.6,164.7 418.8,166.5 419.0,169.0 419.1,171.9 419.3,174.8 419.5,178.2 419.7,175.2 419.8,172.2 420.0,169.4 420.2,167.3 420.3,165.1 420.5,163.3 420.7,162.5 420.8,161.7 421.0,161.0 421.2,161.2 421.4,160.7 421.5,161.3 421.7,161.3 421.9,161.7 422.0,162.7 422.2,164.1 422.4,165.8 422.5,167.6 422.7,170.0 422.9,172.5 423.1,175.1 423.2,174.7 423.4,172.2 423.6,169.6 423.7,167.4 423.9,165.3 424.1,164.0 424.2,163.0 424.4,162.1 424.6,161.3 424.7,161.3 424.9,161.4 425.1,161.5 425.3,161.4 425.4,162.1 425.6,163.1 425.8,164.2 425.9,165.9 426.1,168.6 426.3,171.0 426.4,174.1 426.6,177.5 426.8,179.4 427.0,176.4 427.1,172.8 427.3,170.2 427.5,167.8 427.6,165.4 427.8,164.0 428.0,162.8 428.1,161.9 428.3,161.6 428.5,161.6 428.7,161.6 428.8,161.9 429.0,161.9 429.2,162.7 429.3,163.5 429.5,164.6 429.7,166.3 429.8,168.2 430.0,170.6 430.2,172.9 430.4,175.7 430.5,174.1 430.7,171.3 430.9,169.0 431.0,167.3 431.2,165.6 431.4,164.0 431.5,163.1 431.7,162.3 431.9,162.1 432.1,161.6 432.2,161.7 432.4,161.7 432.6,161.9 432.7,162.6 432.9,163.3 433.1,164.0 433.2,164.8 433.4,166.4 433.6,168.3 433.8,170.0 433.9,172.2 434.1,172.1 434.3,170.2 434.4,168.2 434.6,166.9 434.8,165.5 434.9,164.2 435.1,163.3 435.3,162.9 435.5,162.2 435.6,162.3 435.8,161.8 436.0,162.0 436.1,162.5 436.3,163.2" fill="none" stroke="#e6dc28" stroke-width="1.0" stroke-linejoin="round"/><polyline points="28.8,158.9 29.0,158.8 29.1,158.6 29.3,158.9 29.5,158.9 29.6,158.6 29.8,159.2 30.0,159.3 30.2,160.3 30.3,161.0 30.5,162.5 30.7,163.6 30.8,165.4 31.0,167.6 31.2,167.5 31.3,165.4 31.5,163.2 31.7,162.0 31.9,160.7 32.0,159.8 32.2,159.1 32.4,159.2 32.5,158.6 32.7,158.4 32.9,158.7 33.0,158.6 33.2,158.5 33.4,158.8 33.6,159.0 33.7,159.4 33.9,160.2 34.1,160.9 34.2,161.9 34.4,162.5 34.6,161.4 34.7,160.0 34.9,158.3 35.1,156.3 35.3,154.0 35.4,151.8 35.6,149.6 35.8,147.7 35.9,146.2 36.1,145.2 36.3,144.7 36.4,144.5 36.6,144.6 36.8,145.0 37.0,145.9 37.1,147.2 37.3,149.0 37.5,151.0 37.6,153.3 37.8,155.5 38.0,157.5 38.1,159.3 38.3,160.8 38.5,161.9 38.7,162.7 38.8,162.5 39.0,161.2 39.2,160.1 39.3,158.9 39.5,158.6 39.7,158.6 39.8,157.8 40.0,158.1 40.2,158.2 40.4,157.8 40.5,158.2 40.7,158.0 40.9,158.5 41.0,159.1 41.2,160.2 41.4,161.5 41.5,163.3 41.7,164.9 41.9,167.3 42.0,167.8 42.2,165.4 42.4,163.0 42.6,161.7 42.7,160.1 42.9,159.3 43.1,158.6 43.2,158.3 43.4,157.9 43.6,157.4 43.7,157.4 43.9,157.8 44.1,157.7 44.3,158.0 44.4,158.1 44.6,158.3 44.8,159.4 44.9,159.9 45.1,160.8 45.3,163.1 45.4,164.1 45.6,166.2 45.8,164.4 46.0,162.5 46.1,160.7 46.3,160.0 46.5,158.6 46.6,158.0 46.8,157.8 47.0,157.7 47.1,157.5 47.3,157.6 47.5,157.3 47.7,157.4 47.8,157.3 48.0,157.6 48.2,158.1 48.3,158.5 48.5,159.5 48.7,160.3 48.8,161.7 49.0,163.4 49.2,165.2 49.4,164.5 49.5,162.7 49.7,161.5 49.9,159.8 50.0,158.9 50.2,158.0 50.4,157.7 50.5,157.5 50.7,157.1 50.9,157.2 51.1,157.1 51.2,154.6 51.4,151.6 51.6,148.3 51.7,144.9 51.9,141.7 52.1,138.7 52.2,136.4 52.4,134.7 52.6,133.8 52.8,133.4 52.9,133.5 53.1,134.0 53.3,135.1 53.4,137.0 53.6,139.5 53.8,142.6 53.9,145.9 54.1,149.2 54.3,152.4 54.4,155.2 54.6,156.8 54.8,156.8 55.0,156.8 55.1,157.0 55.3,157.1 55.5,157.7 55.6,157.9 55.8,158.5 56.0,159.7 56.1,161.1 56.3,162.6 56.5,164.2 56.7,162.1 56.8,161.1 57.0,160.0 57.2,158.7 57.3,157.8 57.5,157.4 57.7,156.9 57.8,156.9 58.0,156.6 58.2,156.9 58.4,156.7 58.5,156.4 58.7,156.8 58.9,157.0 59.0,157.0 59.2,157.6 59.4,158.0 59.5,159.6 59.7,160.6 59.9,161.9 60.1,163.8 60.2,163.7 60.4,162.2 60.6,160.4 60.7,159.3 60.9,157.9 61.1,157.1 61.2,157.1 61.4,156.7 61.6,156.4 61.8,156.6 61.9,156.1 62.1,156.2 62.3,156.5 62.4,156.8 62.6,156.8 62.8,157.6 62.9,157.9 63.1,159.1 63.3,160.3 63.5,161.7 63.6,164.0 63.8,165.3 64.0,163.0 64.1,161.2 64.3,160.0 64.5,158.2 64.6,157.2 64.8,156.7 65.0,156.2 65.2,156.4 65.3,156.1 65.5,155.9 65.7,155.9 65.8,156.6 66.0,156.0 66.2,156.2 66.3,156.9 66.5,157.6 66.7,158.5 66.8,159.6 67.0,160.5 67.2,159.8 67.4,158.7 67.5,157.3 67.7,155.7 67.9,153.8 68.0,151.9 68.2,150.0 68.4,148.3 68.5,146.9 68.7,145.9 68.9,145.3 69.1,145.0 69.2,145.0 69.4,145.2 69.6,145.8 69.7,146.8 69.9,148.2 70.1,149.8 70.2,151.7 70.4,153.6 70.6,155.4 70.8,157.0 70.9,158.3 71.1,159.4 71.3,160.2 71.4,159.3 71.6,158.8 71.8,157.7 71.9,156.5 72.1,155.6 72.3,155.7 72.5,155.6 72.6,155.0 72.8,155.5 73.0,155.4 73.1,155.3 73.3,155.7 73.5,155.9 73.6,155.9 73.8,156.6 74.0,157.1 74.2,157.9 74.3,159.1 74.5,160.5 74.7,161.4 74.8,159.6 75.0,159.0 75.2,157.5 75.3,156.9 75.5,156.6 75.7,155.8 75.9,155.2 76.0,155.0 76.2,155.5 76.4,155.2 76.5,155.3 76.7,155.4 76.9,155.2 77.0,155.3 77.2,155.5 77.4,155.6 77.6,156.6 77.7,157.8 77.9,159.0 78.1,160.5 78.2,162.0 78.4,161.3 78.6,159.8 78.7,158.2 78.9,157.2 79.1,156.1 79.2,156.0 79.4,155.4 79.6,155.2 79.8,155.3 79.9,155.1 80.1,154.9 80.3,155.1 80.4,154.7 80.6,155.2 80.8,155.5 80.9,155.8 81.1,157.2 81.3,158.0 81.5,159.9 81.6,161.5 81.8,164.0 82.0,164.7 82.1,162.0 82.3,159.8 82.5,158.5 82.6,157.3 82.8,156.1 83.0,155.3 83.2,155.1 83.3,154.2 83.5,154.5 83.7,154.3 83.8,152.9 84.0,150.1 84.2,146.9 84.3,143.4 84.5,140.0 84.7,136.8 84.9,134.2 85.0,132.2 85.2,131.0 85.4,130.4 85.5,130.3 85.7,130.6 85.9,131.5 86.0,133.1 86.2,135.5 86.4,138.4 86.6,141.7 86.7,145.1 86.9,148.4 87.1,151.4 87.2,154.0 87.4,154.2 87.6,154.4 87.7,154.3 87.9,154.7 88.1,155.0 88.3,155.6 88.4,155.6 88.6,157.1 88.8,158.3 88.9,160.0 89.1,161.6 89.3,161.1 89.4,159.7 89.6,158.4 89.8,156.2 90.0,155.8 90.1,155.2 90.3,154.6 90.5,154.2 90.6,153.9 90.8,153.9 91.0,154.2 91.1,154.3 91.3,154.1 91.5,154.1 91.6,154.6 91.8,155.1 92.0,156.1 92.2,157.3 92.3,158.6 92.5,160.7 92.7,162.5 92.8,164.1 93.0,161.8 93.2,159.3 93.3,157.9 93.5,156.3 93.7,155.6 93.9,154.9 94.0,154.2 94.2,154.1 94.4,153.7 94.5,153.7 94.7,153.7 94.9,153.8 95.0,153.8 95.2,154.0 95.4,154.1 95.6,154.8 95.7,155.5 95.9,156.0 96.1,156.8 96.2,158.4 96.4,159.8 96.6,158.5 96.7,157.0 96.9,156.3 97.1,155.7 97.3,154.3 97.4,154.3 97.6,153.8 97.8,153.5 97.9,153.7 98.1,153.3 98.3,153.6 98.4,153.8 98.6,153.6 98.8,153.5 99.0,153.7 99.1,154.3 99.3,155.0 99.5,156.8 99.6,157.8 99.8,157.9 100.0,157.1 100.1,156.1 100.3,154.8 100.5,153.3 100.7,151.8 100.8,150.2 101.0,148.7 101.2,147.5 101.3,146.5 101.5,145.9 101.7,145.6 101.8,145.5 102.0,145.6 102.2,145.9 102.4,146.6 102.5,147.6 102.7,148.9 102.9,150.3 103.0,151.8 103.2,153.3 103.4,154.7 103.5,155.9 103.7,156.8 103.9,157.5 104.0,158.0 104.2,157.2 104.4,155.3 104.6,154.1 104.7,153.8 104.9,153.2 105.1,152.9 105.2,152.9 105.4,152.7 105.6,152.9 105.7,152.5 105.9,152.8 106.1,152.7 106.3,153.0 106.4,153.8 106.6,154.5 106.8,154.9 106.9,156.2 107.1,157.8 107.3,159.5 107.4,158.2 107.6,156.9 107.8,155.4 108.0,155.1 108.1,153.9 108.3,153.3 108.5,152.9 108.6,152.7 108.8,152.5 109.0,152.2 109.1,152.4 109.3,152.3 109.5,152.6 109.7,152.3 109.8,152.6 110.0,153.4 110.2,154.2 110.3,155.0 110.5,156.1 110.7,157.8 110.8,159.5 111.0,160.4 111.2,158.3 111.4,156.7 111.5,155.1 111.7,153.9 111.9,153.4 112.0,152.9 112.2,152.3 112.4,152.0 112.5,152.1 112.7,151.8 112.9,152.0 113.1,151.7 113.2,151.8 113.4,152.4 113.6,152.9 113.7,154.0 113.9,154.6 114.1,156.1 114.2,157.6 114.4,159.6 114.6,161.8 114.8,159.8 114.9,157.4 115.1,156.1 115.3,154.7 115.4,153.3 115.6,152.8 115.8,152.0 115.9,151.9 116.1,151.5 116.3,151.7 116.4,150.8 116.6,148.2 116.8,145.1 117.0,141.7 117.1,138.3 117.3,135.0 117.5,132.2 117.6,130.0 117.8,128.5 118.0,127.6 118.1,127.4 118.3,127.5 118.5,128.2 118.7,129.5 118.8,131.5 119.0,134.2 119.2,137.3 119.3,140.7 119.5,144.0 119.7,147.2 119.8,149.9 120.0,150.8 120.2,150.9 120.4,150.8 120.5,151.1 120.7,151.6 120.9,151.9 121.0,152.8 121.2,153.4 121.4,154.6 121.5,156.2 121.7,158.2 121.9,158.9 122.1,157.0 122.2,155.4 122.4,153.9 122.6,152.8 122.7,152.2 122.9,151.2 123.1,151.0 123.2,151.1 123.4,150.7 123.6,150.8 123.8,150.5 123.9,151.0 124.1,150.2 124.3,150.7 124.4,151.2 124.6,152.4 124.8,153.1 124.9,154.3 125.1,155.7 125.3,157.9 125.5,160.0 125.6,158.0 125.8,155.8 126.0,154.2 126.1,153.1 126.3,152.1 126.5,151.3 126.6,150.7 126.8,150.1 127.0,150.3 127.2,150.0 127.3,150.2 127.5,150.3 127.7,150.1 127.8,150.2 128.0,150.9 128.2,151.4 128.3,152.0 128.5,152.7 128.7,154.7 128.8,156.5 129.0,158.6 129.2,158.0 129.4,156.0 129.5,154.3 129.7,153.2 129.9,151.6 130.0,151.0 130.2,150.3 130.4,150.1 130.5,149.6 130.7,149.9 130.9,149.7 131.1,149.7 131.2,149.9 131.4,150.1 131.6,149.8 131.7,150.7 131.9,151.3 132.1,152.0 132.2,153.5 132.4,154.6 132.6,154.1 132.8,153.3 132.9,152.4 133.1,151.3 133.3,150.1 133.4,148.9 133.6,147.7 133.8,146.7 133.9,145.9 134.1,145.3 134.3,144.9 134.5,144.8 134.6,144.8 134.8,145.0 135.0,145.4 135.1,146.1 135.3,147.0 135.5,148.1 135.6,149.2 135.8,150.4 136.0,151.5 136.2,152.5 136.3,153.3 136.5,153.9 136.7,153.3 136.8,152.4 137.0,151.3 137.2,150.2 137.3,149.7 137.5,149.5 137.7,149.2 137.9,149.0 138.0,148.6 138.2,149.1 138.4,148.7 138.5,148.5 138.7,149.0 138.9,149.5 139.0,150.3 139.2,150.5 139.4,151.3 139.6,153.2 139.7,154.4 139.9,156.0 140.1,156.1 140.2,154.3 140.4,153.2 140.6,151.5 140.7,150.4 140.9,149.6 141.1,149.5 141.2,148.7 141.4,148.7 141.6,148.6 141.8,148.6 141.9,148.3 142.1,148.6 142.3,148.9 142.4,148.8 142.6,149.0 142.8,149.5 142.9,150.6 143.1,151.6 143.3,153.0 143.5,154.5 143.6,155.7 143.8,154.4 144.0,152.7 144.1,151.4 144.3,150.3 144.5,149.7 144.6,148.9 144.8,148.3 145.0,148.5 145.2,148.0 145.3,147.9 145.5,147.8 145.7,148.1 145.8,147.9 146.0,148.2 146.2,148.7 146.3,149.2 146.5,150.2 146.7,151.1 146.9,152.2 147.0,153.8 147.2,155.6 147.4,155.0 147.5,153.2 147.7,151.6 147.9,150.6 148.0,149.4 148.2,148.6 148.4,147.9 148.6,148.0 148.7,147.8 148.9,147.7 149.1,147.6 149.2,145.3 149.4,142.4 149.6,139.1 149.7,135.6 149.9,132.2 150.1,129.1 150.3,126.6 150.4,124.8 150.6,123.7 150.8,123.2 150.9,123.2 151.1,123.6 151.3,124.7 151.4,126.5 151.6,128.9 151.8,131.9 152.0,135.2 152.1,138.6 152.3,141.8 152.5,144.7 152.6,146.9 152.8,146.7 153.0,146.6 153.1,146.8 153.3,147.2 153.5,147.6 153.6,148.3 153.8,149.2 154.0,150.7 154.2,152.6 154.3,154.1 154.5,156.6 154.7,154.7 154.8,152.5 155.0,150.5 155.2,149.3 155.3,147.9 155.5,147.2 155.7,147.0 155.9,146.7 156.0,145.8 156.2,146.2 156.4,146.4 156.5,145.9 156.7,146.1 156.9,146.5 157.0,146.5 157.2,147.3 157.4,148.0 157.6,148.8 157.7,150.8 157.9,152.5 158.1,154.8 158.2,154.5 158.4,152.2 158.6,150.1 158.7,148.8 158.9,147.6 159.1,146.8 159.3,145.7 159.4,145.4 159.6,145.0 159.8,145.4 159.9,145.2 160.1,145.1 160.3,145.0 160.4,145.2 160.6,145.3 160.8,145.8 161.0,146.3 161.1,147.5 161.3,148.3 161.5,149.4 161.6,151.0 161.8,152.2 162.0,150.4 162.1,148.9 162.3,147.7 162.5,146.8 162.7,145.5 162.8,145.0 163.0,144.5 163.2,144.7 163.3,144.4 163.5,144.3 163.7,144.2 163.8,144.5 164.0,144.4 164.2,144.5 164.4,145.2 164.5,145.4 164.7,146.2 164.9,148.1 165.0,148.9 165.2,149.0 165.4,148.5 165.5,147.8 165.7,147.0 165.9,146.1 166.0,145.1 166.2,144.1 166.4,143.3 166.6,142.5 166.7,142.0 166.9,141.7 167.1,141.5 167.2,141.5 167.4,141.6 167.6,141.8 167.7,142.3 167.9,142.9 168.1,143.6 168.3,144.5 168.4,145.4 168.6,146.2 168.8,146.9 168.9,147.6 169.1,148.0 169.3,148.0 169.4,146.5 169.6,145.5 169.8,144.7 170.0,143.9 170.1,143.4 170.3,143.1 170.5,142.9 170.6,142.6 170.8,143.1 171.0,142.9 171.1,142.5 171.3,142.6 171.5,142.9 171.7,143.4 171.8,144.2 172.0,145.0 172.2,146.2 172.3,147.6 172.5,149.2 172.7,150.5 172.8,148.6 173.0,146.8 173.2,145.1 173.4,144.3 173.5,143.8 173.7,142.7 173.9,142.3 174.0,142.3 174.2,142.0 174.4,141.8 174.5,142.2 174.7,142.0 174.9,142.1 175.1,141.9 175.2,142.4 175.4,142.9 175.6,143.7 175.7,144.7 175.9,145.9 176.1,147.2 176.2,148.9 176.4,147.7 176.6,146.4 176.8,145.0 176.9,143.6 177.1,142.7 177.3,142.1 177.4,141.4 177.6,141.4 177.8,141.3 177.9,140.9 178.1,141.1 178.3,141.3 178.4,141.3 178.6,141.4 178.8,141.4 179.0,141.9 179.1,142.7 179.3,143.9 179.5,145.6 179.6,147.0 179.8,149.0 180.0,149.4 180.1,146.8 180.3,145.3 180.5,143.8 180.7,142.9 180.8,142.1 181.0,141.0 181.2,140.7 181.3,140.6 181.5,140.2 181.7,140.1 181.8,139.5 182.0,136.9 182.2,133.9 182.4,130.7 182.5,127.5 182.7,124.5 182.9,122.0 183.0,120.0 183.2,118.8 183.4,118.1 183.5,118.0 183.7,118.2 183.9,118.9 184.1,120.3 184.2,122.3 184.4,124.9 184.6,127.9 184.7,131.0 184.9,134.1 185.1,136.9 185.2,139.3 185.4,139.2 185.6,139.1 185.8,139.5 185.9,139.5 186.1,139.9 186.3,140.5 186.4,141.0 186.6,142.1 186.8,143.5 186.9,145.1 187.1,147.0 187.3,146.4 187.5,144.4 187.6,142.8 187.8,142.0 188.0,140.7 188.1,139.9 188.3,139.0 188.5,139.1 188.6,138.6 188.8,138.6 189.0,138.3 189.2,138.5 189.3,138.6 189.5,138.4 189.7,138.8 189.8,139.5 190.0,140.0 190.2,141.0 190.3,142.5 190.5,144.0 190.7,146.3 190.8,147.0 191.0,145.2 191.2,143.4 191.4,141.4 191.5,140.4 191.7,139.3 191.9,138.5 192.0,138.2 192.2,137.9 192.4,138.0 192.5,138.0 192.7,137.5 192.9,137.7 193.1,137.9 193.2,138.2 193.4,137.8 193.6,139.1 193.7,139.6 193.9,141.0 194.1,141.9 194.2,143.3 194.4,145.2 194.6,144.0 194.8,142.1 194.9,140.2 195.1,139.7 195.3,138.3 195.4,137.8 195.6,137.3 195.8,136.9 195.9,136.8 196.1,136.8 196.3,136.8 196.5,136.9 196.6,136.9 196.8,136.8 197.0,137.4 197.1,138.2 197.3,139.1 197.5,140.2 197.6,141.8 197.8,143.7 198.0,146.0 198.2,145.9 198.3,143.2 198.5,141.3 198.7,139.9 198.8,138.6 199.0,137.6 199.2,136.1 199.3,136.1 199.5,135.2 199.7,135.9 199.9,135.7 200.0,135.6 200.2,135.6 200.4,135.9 200.5,135.7 200.7,136.3 200.9,136.7 201.0,137.3 201.2,138.3 201.4,139.3 201.6,140.4 201.7,141.8 201.9,140.2 202.1,138.6 202.2,137.6 202.4,136.7 202.6,135.5 202.7,135.2 202.9,134.7 203.1,134.4 203.2,134.5 203.4,134.2 203.6,134.2 203.8,134.3 203.9,134.4 204.1,134.5 204.3,135.3 204.4,135.3 204.6,136.4 204.8,137.3 204.9,139.1 205.1,141.0 205.3,143.1 205.5,141.5 205.6,139.5 205.8,138.0 206.0,136.3 206.1,135.4 206.3,134.1 206.5,134.0 206.6,133.6 206.8,133.2 207.0,132.9 207.2,132.9 207.3,132.9 207.5,132.9 207.7,133.0 207.8,133.2 208.0,133.7 208.2,134.5 208.3,134.8 208.5,136.0 208.7,137.4 208.9,139.2 209.0,139.3 209.2,137.9 209.4,136.3 209.5,134.9 209.7,133.7 209.9,133.1 210.0,132.5 210.2,132.1 210.4,131.7 210.6,131.8 210.7,131.3 210.9,131.8 211.1,130.9 211.2,131.4 211.4,131.4 211.6,132.2 211.7,132.3 211.9,133.7 212.1,134.1 212.3,136.1 212.4,137.3 212.6,138.8 212.8,137.0 212.9,135.7 213.1,134.0 213.3,132.2 213.4,132.0 213.6,131.1 213.8,130.3 214.0,130.4 214.1,129.9 214.3,130.0 214.5,129.8 214.6,127.2 214.8,124.2 215.0,120.9 215.1,117.5 215.3,114.3 215.5,111.4 215.6,109.1 215.8,107.5 216.0,106.6 216.2,106.3 216.3,106.4 216.5,106.9 216.7,108.0 216.8,109.9 217.0,112.3 217.2,115.2 217.3,118.4 217.5,121.6 217.7,124.5 217.9,127.1 218.0,128.1 218.2,128.2 218.4,128.1 218.5,127.7 218.7,128.1 218.9,128.1 219.0,128.8 219.2,129.8 219.4,131.1 219.6,132.5 219.7,133.9 219.9,134.3 220.1,132.7 220.2,130.8 220.4,129.4 220.6,128.1 220.7,127.3 220.9,126.5 221.1,126.1 221.3,125.5 221.4,125.6 221.6,125.1 221.8,125.1 221.9,125.3 222.1,125.0 222.3,124.7 222.4,125.5 222.6,125.9 222.8,126.6 223.0,127.4 223.1,128.6 223.3,129.9 223.5,131.5 223.6,130.1 223.8,127.8 224.0,126.1 224.1,124.6 224.3,123.8 224.5,122.7 224.7,121.7 224.8,121.2 225.0,120.8 225.2,120.5 225.3,119.7 225.5,119.8 225.7,119.3 225.8,119.0 226.0,118.9 226.2,119.2 226.4,119.6 226.5,119.7 226.7,120.3 226.9,120.7 227.0,121.8 227.2,121.2 227.4,119.0 227.5,117.7 227.7,116.6 227.9,114.9 228.0,114.2 228.2,113.5 228.4,112.4 228.6,112.1 228.7,111.7 228.9,111.4 229.1,110.5 229.2,110.5 229.4,110.0 229.6,109.9 229.7,109.8 229.9,109.8 230.1,110.3 230.3,110.5 230.4,111.4 230.6,111.6 230.8,110.6 230.9,109.3 231.1,107.9 231.3,106.3 231.4,104.8 231.6,103.4 231.8,102.2 232.0,101.2 232.1,100.5 232.3,100.2 232.5,100.0 232.6,100.0 232.8,100.2 233.0,100.5 233.1,101.2 233.3,102.2 233.5,103.4 233.7,104.8 233.8,106.3 234.0,107.9 234.2,109.3 234.3,110.6 234.5,111.6 234.7,112.5 234.8,112.3 235.0,111.2 235.2,110.5 235.4,109.9 235.5,109.8 235.7,109.8 235.9,110.6 236.0,110.5 236.2,111.2 236.4,111.5 236.5,112.3 236.7,113.0 236.9,113.3 237.1,114.5 237.2,115.4 237.4,117.6 237.6,118.9 237.7,120.7 237.9,123.2 238.1,124.3 238.2,122.9 238.4,121.8 238.6,120.4 238.7,119.8 238.9,119.7 239.1,119.0 239.3,119.1 239.4,119.2 239.6,119.4 239.8,120.2 239.9,120.5 240.1,120.8 240.3,121.3 240.4,122.0 240.6,122.9 240.8,123.7 241.0,125.0 241.1,126.5 241.3,128.9 241.5,130.8 241.6,132.7 241.8,131.0 242.0,129.3 242.1,128.0 242.3,126.9 242.5,125.8 242.7,125.2 242.8,125.0 243.0,124.7 243.2,124.9 243.3,125.2 243.5,125.2 243.7,125.0 243.8,125.4 244.0,126.2 244.2,126.4 244.4,127.6 244.5,128.7 244.7,130.1 244.9,131.8 245.0,134.2 245.2,136.4 245.4,135.7 245.5,133.7 245.7,131.8 245.9,130.4 246.1,129.3 246.2,128.4 246.4,128.1 246.6,127.8 246.7,127.5 246.9,127.9 247.1,128.1 247.2,127.1 247.4,124.5 247.6,121.6 247.8,118.4 247.9,115.2 248.1,112.3 248.3,109.9 248.4,108.0 248.6,106.9 248.8,106.4 248.9,106.3 249.1,106.6 249.3,107.5 249.5,109.1 249.6,111.4 249.8,114.3 250.0,117.5 250.1,120.9 250.3,124.2 250.5,127.2 250.6,129.7 250.8,130.3 251.0,130.5 251.1,130.4 251.3,130.7 251.5,130.6 251.7,131.9 251.8,132.2 252.0,133.3 252.2,134.0 252.3,135.5 252.5,136.7 252.7,135.7 252.8,134.6 253.0,133.7 253.2,133.1 253.4,132.3 253.5,131.9 253.7,131.6 253.9,131.9 254.0,131.4 254.2,131.8 254.4,131.2 254.5,131.5 254.7,131.9 254.9,132.0 255.1,133.0 255.2,133.5 255.4,133.4 255.6,134.5 255.7,135.9 255.9,137.8 256.1,139.3 256.2,138.9 256.4,137.1 256.6,135.9 256.8,134.4 256.9,133.8 257.1,133.6 257.3,133.3 257.4,132.7 257.6,132.9 257.8,133.2 257.9,133.0 258.1,133.0 258.3,133.3 258.5,133.4 258.6,133.7 258.8,134.1 259.0,135.0 259.1,136.1 259.3,137.3 259.5,139.4 259.6,141.2 259.8,142.4 260.0,140.7 260.2,138.9 260.3,137.5 260.5,136.2 260.7,135.3 260.8,135.2 261.0,134.3 261.2,134.1 261.3,134.1 261.5,134.3 261.7,134.4 261.9,134.6 262.0,134.5 262.2,134.5 262.4,135.3 262.5,136.0 262.7,136.6 262.9,137.6 263.0,138.9 263.2,140.6 263.4,141.9 263.5,140.6 263.7,139.3 263.9,138.2 264.1,137.0 264.2,136.8 264.4,135.9 264.6,135.9 264.7,135.7 264.9,135.5 265.1,135.9 265.2,135.6 265.4,135.6 265.6,135.9 265.8,136.3 265.9,136.6 266.1,137.2 266.3,138.5 266.4,139.9 266.6,141.9 266.8,143.5 266.9,145.9 267.1,145.9 267.3,143.5 267.5,141.9 267.6,140.4 267.8,138.8 268.0,137.9 268.1,137.2 268.3,137.4 268.5,136.8 268.6,137.1 268.8,136.8 269.0,137.0 269.2,137.0 269.3,136.8 269.5,137.7 269.7,138.3 269.8,138.7 270.0,140.3 270.2,141.8 270.3,143.5 270.5,145.9 270.7,147.4 270.9,145.5 271.0,143.7 271.2,141.5 271.4,140.3 271.5,139.6 271.7,138.6 271.9,138.0 272.0,137.7 272.2,137.8 272.4,137.7 272.6,137.9 272.7,137.6 272.9,138.2 273.1,138.2 273.2,138.9 273.4,139.4 273.6,140.3 273.7,141.8 273.9,143.4 274.1,145.5 274.3,147.9 274.4,147.0 274.6,144.7 274.8,142.8 274.9,141.4 275.1,140.5 275.3,139.8 275.4,139.0 275.6,138.7 275.8,138.4 275.9,138.6 276.1,138.8 276.3,138.1 276.5,138.8 276.6,138.8 276.8,138.8 277.0,139.9 277.1,140.5 277.3,141.6 277.5,142.6 277.6,144.8 277.8,146.2 278.0,146.6 278.2,145.2 278.3,143.5 278.5,142.3 278.7,141.4 278.8,140.0 279.0,140.2 279.2,139.5 279.3,139.5 279.5,139.6 279.7,139.3 279.9,139.3 280.0,136.9 280.2,134.1 280.4,131.0 280.5,127.9 280.7,124.9 280.9,122.3 281.0,120.3 281.2,118.9 281.4,118.2 281.6,118.0 281.7,118.1 281.9,118.8 282.1,120.0 282.2,122.0 282.4,124.5 282.6,127.5 282.7,130.7 282.9,133.9 283.1,136.9 283.3,139.5 283.4,139.9 283.6,140.4 283.8,140.5 283.9,140.6 284.1,141.0 284.3,141.4 284.4,142.1 284.6,142.8 284.8,144.0 285.0,145.9 285.1,147.0 285.3,146.5 285.5,145.1 285.6,143.7 285.8,143.0 286.0,142.2 286.1,141.9 286.3,141.1 286.5,140.7 286.7,140.9 286.8,141.2 287.0,141.6 287.2,141.3 287.3,141.0 287.5,141.3 287.7,141.5 287.8,142.1 288.0,142.6 288.2,143.3 288.3,144.9 288.5,146.2 288.7,147.7 288.9,148.7 289.0,147.4 289.2,145.6 289.4,144.3 289.5,143.7 289.7,142.5 289.9,142.5 290.0,141.9 290.2,141.7 290.4,141.9 290.6,142.2 290.7,141.8 290.9,142.2 291.1,142.2 291.2,142.1 291.4,143.0 291.6,143.3 291.7,144.0 291.9,145.3 292.1,146.7 292.3,148.7 292.4,150.3 292.6,149.3 292.8,147.4 292.9,145.8 293.1,144.7 293.3,144.0 293.4,143.0 293.6,142.6 293.8,142.6 294.0,142.8 294.1,142.7 294.3,142.7 294.5,142.8 294.6,142.5 294.8,143.1 295.0,143.2 295.1,144.4 295.3,145.1 295.5,146.3 295.7,147.9 295.8,148.4 296.0,148.0 296.2,147.6 296.3,146.9 296.5,146.2 296.7,145.4 296.8,144.5 297.0,143.6 297.2,142.9 297.4,142.3 297.5,141.8 297.7,141.6 297.9,141.5 298.0,141.5 298.2,141.7 298.4,142.0 298.5,142.5 298.7,143.3 298.9,144.1 299.1,145.1 299.2,146.1 299.4,147.0 299.6,147.8 299.7,148.5 299.9,149.0 300.1,148.9 300.2,147.1 300.4,146.4 300.6,145.4 300.7,145.1 300.9,144.5 301.1,144.5 301.3,144.5 301.4,143.8 301.6,144.0 301.8,144.5 301.9,144.5 302.1,145.0 302.3,145.2 302.4,145.4 302.6,146.4 302.8,147.1 303.0,148.3 303.1,149.5 303.3,151.2 303.5,150.1 303.6,148.8 303.8,147.4 304.0,147.4 304.1,146.1 304.3,145.6 304.5,145.2 304.7,145.1 304.8,145.1 305.0,145.3 305.2,145.3 305.3,145.3 305.5,145.2 305.7,145.5 305.8,146.1 306.0,146.4 306.2,147.1 306.4,147.6 306.5,149.3 306.7,150.7 306.9,152.5 307.0,152.1 307.2,151.0 307.4,149.6 307.5,148.5 307.7,147.4 307.9,146.9 308.1,146.6 308.2,146.2 308.4,146.0 308.6,146.0 308.7,146.0 308.9,146.1 309.1,146.0 309.2,145.9 309.4,146.8 309.6,146.6 309.8,147.6 309.9,148.2 310.1,149.5 310.3,150.7 310.4,152.4 310.6,153.8 310.8,152.1 310.9,151.0 311.1,149.9 311.3,148.7 311.5,147.9 311.6,147.2 311.8,147.0 312.0,147.0 312.1,146.7 312.3,147.0 312.5,146.9 312.6,144.7 312.8,141.8 313.0,138.6 313.1,135.2 313.3,131.9 313.5,128.9 313.7,126.5 313.8,124.7 314.0,123.6 314.2,123.2 314.3,123.2 314.5,123.7 314.7,124.8 314.8,126.6 315.0,129.1 315.2,132.2 315.4,135.6 315.5,139.1 315.7,142.4 315.9,145.3 316.0,147.5 316.2,147.6 316.4,147.7 316.5,147.8 316.7,148.2 316.9,148.7 317.1,149.2 317.2,149.8 317.4,150.7 317.6,152.0 317.7,153.7 317.9,154.4 318.1,153.1 318.2,151.2 318.4,150.4 318.6,149.5 318.8,148.9 318.9,148.5 319.1,148.2 319.3,148.0 319.4,147.9 319.6,148.1 319.8,148.3 319.9,148.5 320.1,148.1 320.3,148.3 320.5,148.8 320.6,149.3 320.8,150.5 321.0,151.3 321.1,152.8 321.3,154.1 321.5,156.1 321.6,154.7 321.8,153.4 322.0,151.6 322.2,150.7 322.3,149.4 322.5,148.9 322.7,148.6 322.8,148.5 323.0,148.6 323.2,148.6 323.3,148.2 323.5,148.6 323.7,148.4 323.9,149.2 324.0,149.2 324.2,149.7 324.4,150.4 324.5,151.5 324.7,152.8 324.9,154.2 325.0,156.2 325.2,155.9 325.4,154.3 325.5,152.7 325.7,151.6 325.9,150.4 326.1,150.5 326.2,149.2 326.4,149.0 326.6,149.1 326.7,149.1 326.9,148.7 327.1,148.6 327.2,148.7 327.4,149.0 327.6,149.3 327.8,150.0 327.9,151.1 328.1,152.2 328.3,153.3 328.4,154.3 328.6,153.9 328.8,153.3 328.9,152.5 329.1,151.5 329.3,150.4 329.5,149.2 329.6,148.1 329.8,147.0 330.0,146.1 330.1,145.4 330.3,145.0 330.5,144.8 330.6,144.8 330.8,144.9 331.0,145.3 331.2,145.9 331.3,146.7 331.5,147.7 331.7,148.9 331.8,150.1 332.0,151.3 332.2,152.4 332.3,153.3 332.5,154.1 332.7,154.6 332.9,154.1 333.0,152.7 333.2,151.4 333.4,150.8 333.5,150.2 333.7,149.8 333.9,149.5 334.0,149.8 334.2,149.5 334.4,150.1 334.6,149.7 334.7,150.1 334.9,150.2 335.1,151.0 335.2,151.7 335.4,152.8 335.6,153.9 335.7,155.3 335.9,157.4 336.1,157.6 336.3,155.6 336.4,154.2 336.6,152.7 336.8,152.0 336.9,151.1 337.1,150.7 337.3,150.9 337.4,150.2 337.6,150.2 337.8,150.3 337.9,150.2 338.1,150.1 338.3,150.5 338.5,150.8 338.6,150.5 338.8,151.7 339.0,152.6 339.1,153.7 339.3,155.5 339.5,156.8 339.6,158.7 339.8,156.6 340.0,155.0 340.2,153.9 340.3,152.5 340.5,151.8 340.7,151.0 340.8,150.7 341.0,150.8 341.2,150.7 341.3,150.3 341.5,150.4 341.7,151.1 341.9,150.6 342.0,150.8 342.2,151.5 342.4,152.0 342.5,153.0 342.7,154.5 342.9,156.2 343.0,157.8 343.2,160.3 343.4,159.1 343.6,157.0 343.7,155.4 343.9,153.9 344.1,152.9 344.2,152.1 344.4,151.3 344.6,151.2 344.7,150.9 344.9,150.9 345.1,151.0 345.3,149.9 345.4,147.2 345.6,144.0 345.8,140.7 345.9,137.3 346.1,134.2 346.3,131.5 346.4,129.5 346.6,128.2 346.8,127.5 347.0,127.4 347.1,127.6 347.3,128.5 347.5,130.0 347.6,132.2 347.8,135.0 348.0,138.3 348.1,141.7 348.3,145.1 348.5,148.2 348.7,150.8 348.8,151.1 349.0,151.5 349.2,151.7 349.3,152.1 349.5,152.4 349.7,153.3 349.8,154.3 350.0,155.1 350.2,156.9 350.3,158.6 350.5,160.7 350.7,159.0 350.9,157.1 351.0,155.9 351.2,154.7 351.4,153.4 351.5,152.6 351.7,152.2 351.9,152.0 352.0,152.0 352.2,151.7 352.4,152.0 352.6,151.8 352.7,152.2 352.9,152.5 353.1,153.0 353.2,153.3 353.4,154.0 353.6,155.2 353.7,157.0 353.9,158.7 354.1,160.8 354.3,160.6 354.4,158.4 354.6,157.0 354.8,155.8 354.9,154.2 355.1,153.4 355.3,152.5 355.4,152.5 355.6,152.2 355.8,152.0 356.0,151.9 356.1,152.6 356.3,152.1 356.5,152.3 356.6,152.9 356.8,153.6 357.0,154.5 357.1,155.7 357.3,157.0 357.5,159.2 357.7,161.3 357.8,162.3 358.0,160.6 358.2,158.2 358.3,156.8 358.5,154.9 358.7,154.0 358.8,153.4 359.0,152.9 359.2,153.0 359.4,152.4 359.5,152.7 359.7,152.5 359.9,152.9 360.0,152.9 360.2,152.9 360.4,153.8 360.5,153.8 360.7,154.6 360.9,155.0 361.1,156.3 361.2,157.5 361.4,156.8 361.6,155.9 361.7,154.7 361.9,153.3 362.1,151.8 362.2,150.3 362.4,148.9 362.6,147.6 362.7,146.6 362.9,145.9 363.1,145.6 363.3,145.5 363.4,145.6 363.6,145.9 363.8,146.5 363.9,147.5 364.1,148.7 364.3,150.2 364.4,151.8 364.6,153.3 364.8,154.8 365.0,156.1 365.1,157.1 365.3,157.9 365.5,158.2 365.6,156.6 365.8,155.3 366.0,154.7 366.1,154.6 366.3,153.8 366.5,153.3 366.7,153.6 366.8,153.4 367.0,153.5 367.2,153.5 367.3,153.4 367.5,153.8 367.7,154.5 367.8,155.0 368.0,156.0 368.2,156.6 368.4,158.3 368.5,159.6 368.7,160.9 368.9,159.5 369.0,157.8 369.2,156.6 369.4,155.7 369.5,155.0 369.7,154.5 369.9,154.3 370.1,154.0 370.2,153.7 370.4,154.3 370.6,153.8 370.7,153.9 370.9,153.8 371.1,153.7 371.2,154.4 371.4,155.1 371.6,156.0 371.8,157.0 371.9,158.5 372.1,160.2 372.3,162.0 372.4,160.9 372.6,159.2 372.8,157.7 372.9,156.4 373.1,155.9 373.3,154.7 373.5,154.5 373.6,154.3 373.8,153.7 374.0,154.2 374.1,154.0 374.3,154.1 374.5,154.1 374.6,154.1 374.8,154.8 375.0,155.3 375.1,156.4 375.3,157.5 375.5,158.5 375.7,160.9 375.8,162.9 376.0,163.5 376.2,161.3 376.3,159.2 376.5,157.9 376.7,156.5 376.8,156.2 377.0,155.0 377.2,154.4 377.4,154.4 377.5,154.6 377.7,154.2 377.9,153.9 378.0,151.4 378.2,148.4 378.4,145.1 378.5,141.7 378.7,138.4 378.9,135.5 379.1,133.1 379.2,131.5 379.4,130.6 379.6,130.3 379.7,130.4 379.9,131.0 380.1,132.2 380.2,134.2 380.4,136.8 380.6,140.0 380.8,143.4 380.9,146.9 381.1,150.1 381.3,152.9 381.4,154.6 381.6,154.8 381.8,154.7 381.9,154.8 382.1,155.5 382.3,155.6 382.5,156.5 382.6,157.2 382.8,157.9 383.0,159.3 383.1,160.9 383.3,160.6 383.5,159.0 383.6,157.7 383.8,156.8 384.0,156.1 384.2,155.5 384.3,155.1 384.5,155.4 384.7,155.0 384.8,154.7 385.0,154.9 385.2,155.2 385.3,155.1 385.5,155.1 385.7,155.2 385.9,155.7 386.0,156.7 386.2,157.8 386.4,158.9 386.5,160.6 386.7,162.8 386.9,163.3 387.0,161.4 387.2,160.0 387.4,158.7 387.5,157.4 387.7,156.7 387.9,156.2 388.1,155.7 388.2,155.2 388.4,155.6 388.6,155.5 388.7,155.4 388.9,155.1 389.1,155.4 389.2,155.1 389.4,155.7 389.6,155.8 389.8,156.9 389.9,158.0 390.1,158.9 390.3,160.4 390.4,161.5 390.6,160.4 390.8,159.1 390.9,158.2 391.1,157.2 391.3,156.8 391.5,156.4 391.6,155.8 391.8,155.3 392.0,155.6 392.1,155.7 392.3,155.6 392.5,155.6 392.6,155.8 392.8,156.0 393.0,155.5 393.2,156.9 393.3,157.4 393.5,158.3 393.7,159.3 393.8,160.2 394.0,159.4 394.2,158.3 394.3,157.0 394.5,155.4 394.7,153.6 394.9,151.7 395.0,149.8 395.2,148.2 395.4,146.8 395.5,145.8 395.7,145.2 395.9,145.0 396.0,145.0 396.2,145.3 396.4,145.9 396.6,146.9 396.7,148.3 396.9,150.0 397.1,151.9 397.2,153.8 397.4,155.7 397.6,157.3 397.7,158.7 397.9,159.8 398.1,160.5 398.3,160.2 398.4,158.6 398.6,157.2 398.8,156.9 398.9,156.6 399.1,156.3 399.3,155.8 399.4,156.0 399.6,156.5 399.8,155.9 399.9,156.2 400.1,156.2 400.3,156.5 400.5,157.2 400.6,158.3 400.8,159.4 401.0,160.4 401.1,162.0 401.3,163.7 401.5,162.5 401.6,161.4 401.8,160.1 402.0,159.0 402.2,157.7 402.3,157.4 402.5,156.9 402.7,156.4 402.8,156.3 403.0,156.2 403.2,156.4 403.3,156.7 403.5,156.2 403.7,156.3 403.9,157.1 404.0,157.5 404.2,157.9 404.4,159.1 404.5,160.5 404.7,162.2 404.9,164.3 405.0,164.8 405.2,162.7 405.4,161.1 405.6,159.5 405.7,158.8 405.9,158.0 406.1,157.1 406.2,156.7 406.4,157.1 406.6,156.8 406.7,156.4 406.9,156.3 407.1,156.6 407.3,157.0 407.4,157.0 407.6,157.5 407.8,158.2 407.9,159.5 408.1,161.0 408.3,162.1 408.4,164.2 408.6,166.2 408.8,164.0 409.0,162.0 409.1,160.8 409.3,159.4 409.5,158.5 409.6,158.0 409.8,157.2 410.0,157.1 410.1,156.8 410.3,156.9 410.5,157.0 410.7,155.2 410.8,152.4 411.0,149.2 411.2,145.9 411.3,142.6 411.5,139.5 411.7,137.0 411.8,135.1 412.0,134.0 412.2,133.5 412.3,133.4 412.5,133.8 412.7,134.7 412.9,136.4 413.0,138.7 413.2,141.7 413.4,144.9 413.5,148.3 413.7,151.6 413.9,154.6 414.0,156.9 414.2,157.4 414.4,157.0 414.6,157.3 414.7,157.6 414.9,158.3 415.1,159.1 415.2,160.4 415.4,161.8 415.6,163.9 415.7,165.6 415.9,166.4 416.1,164.4 416.3,162.6 416.4,160.9 416.6,159.5 416.8,158.6 416.9,158.2 417.1,157.9 417.3,157.6 417.4,157.4 417.6,157.5 417.8,157.3 418.0,157.5 418.1,157.9 418.3,158.0 418.5,158.3 418.6,158.4 418.8,159.2 419.0,159.8 419.1,161.2 419.3,162.1 419.5,163.3 419.7,162.3 419.8,161.2 420.0,159.7 420.2,159.1 420.3,158.9 420.5,158.3 420.7,157.9 420.8,157.5 421.0,158.0 421.2,157.9 421.4,157.9 421.5,157.5 421.7,157.9 421.9,158.2 422.0,158.3 422.2,158.8 422.4,159.5 422.5,160.7 422.7,161.8 422.9,163.3 423.1,164.8 423.2,164.6 423.4,163.4 423.6,162.1 423.7,160.7 423.9,159.9 424.1,158.8 424.2,158.4 424.4,158.2 424.6,158.0 424.7,158.3 424.9,157.7 425.1,157.9 425.3,158.0 425.4,158.1 425.6,158.7 425.8,158.5 425.9,159.9 426.1,160.7 426.3,161.8 426.4,162.7 426.6,161.9 426.8,160.8 427.0,159.3 427.1,157.5 427.3,155.5 427.5,153.3 427.6,151.0 427.8,149.0 428.0,147.2 428.1,145.9 428.3,145.0 428.5,144.6 428.7,144.5 428.8,144.7 429.0,145.2 429.2,146.2 429.3,147.7 429.5,149.6 429.7,151.8 429.8,154.0 430.0,156.3 430.2,158.3 430.4,160.0 430.5,161.4 430.7,162.2 430.9,161.0 431.0,160.4 431.2,159.6 431.4,159.2 431.5,158.6 431.7,158.9 431.9,158.9 432.1,158.3 432.2,158.4 432.4,158.4 432.6,158.8 432.7,158.4 432.9,159.2 433.1,159.7 433.2,160.3 433.4,161.7 433.6,162.5 433.8,164.2 433.9,166.2 434.1,166.7 434.3,164.6 434.4,162.9 434.6,161.8 434.8,160.6 434.9,159.8 435.1,159.3 435.3,159.1 435.5,159.4 435.6,158.6 435.8,158.9 436.0,158.8 436.1,158.8 436.3,159.3" fill="none" stroke="#ff7f0e" stroke-width="1.05" stroke-linejoin="round"/><g stroke="#ffffff" stroke-opacity="0.125" stroke-width="1" fill="none"><line x1="475.40" y1="70.40" x2="475.40" y2="245.90"/><line x1="516.16" y1="70.40" x2="516.16" y2="245.90"/><line x1="556.92" y1="70.40" x2="556.92" y2="245.90"/><line x1="597.68" y1="70.40" x2="597.68" y2="245.90"/><line x1="638.44" y1="70.40" x2="638.44" y2="245.90"/><line x1="679.20" y1="70.40" x2="679.20" y2="245.90"/><line x1="719.96" y1="70.40" x2="719.96" y2="245.90"/><line x1="760.72" y1="70.40" x2="760.72" y2="245.90"/><line x1="801.48" y1="70.40" x2="801.48" y2="245.90"/><line x1="842.24" y1="70.40" x2="842.24" y2="245.90"/><line x1="883.00" y1="70.40" x2="883.00" y2="245.90"/><line x1="472.90" y1="70.40" x2="883.00" y2="70.40"/><line x1="472.90" y1="87.70" x2="883.00" y2="87.70"/><line x1="472.90" y1="105.00" x2="883.00" y2="105.00"/><line x1="472.90" y1="122.30" x2="883.00" y2="122.30"/><line x1="472.90" y1="139.60" x2="883.00" y2="139.60"/><line x1="472.90" y1="156.90" x2="883.00" y2="156.90"/><line x1="472.90" y1="174.20" x2="883.00" y2="174.20"/><line x1="472.90" y1="191.50" x2="883.00" y2="191.50"/><line x1="472.90" y1="208.80" x2="883.00" y2="208.80"/><line x1="472.90" y1="226.10" x2="883.00" y2="226.10"/><line x1="472.90" y1="243.40" x2="883.00" y2="243.40"/><rect x="475.40" y="70.40" width="407.60" height="173.00" stroke-opacity="0.11"/></g><polyline points="475.7,234.5 476.4,236.8 477.1,236.5 477.8,236.0 478.5,235.9 479.2,235.8 480.0,236.0 480.7,236.4 481.4,235.8 482.1,235.0 482.8,236.0 483.5,235.6 484.2,235.7 484.9,236.2 485.6,235.7 486.3,236.3 487.0,236.2 487.8,236.0 488.5,235.9 489.2,236.3 489.9,236.5 490.6,235.7 491.3,235.1 492.0,235.3 492.7,234.9 493.4,236.0 494.1,236.2 494.8,236.0 495.6,236.4 496.3,236.4 497.0,236.6 497.7,236.2 498.4,236.6 499.1,236.3 499.8,236.4 500.5,236.3 501.2,236.3 501.9,235.9 502.6,236.6 503.4,236.1 504.1,236.1 504.8,235.0 505.5,235.8 506.2,235.3 506.9,236.2 507.6,235.8 508.3,236.0 509.0,236.0 509.7,235.5 510.4,235.9 511.2,235.5 511.9,236.2 512.6,236.7 513.3,236.8 514.0,236.7 514.7,235.9 515.3,101.5 516.0,106.0 516.7,108.1 517.4,107.5 518.1,107.1 518.8,108.0 519.6,108.3 520.3,108.8 521.0,108.4 521.7,108.4 522.4,107.4 523.1,106.9 523.8,106.9 524.5,107.1 525.2,107.8 525.9,107.4 526.7,107.8 527.4,108.2 528.1,107.8 528.8,107.8 529.5,107.8 530.2,107.9 530.9,108.2 531.6,108.1 532.3,108.5 533.0,108.3 533.7,108.2 534.5,107.4 535.2,107.3 535.9,107.6 536.6,108.3 537.3,107.9 538.0,107.1 538.7,108.3 539.4,107.7 540.1,107.8 540.8,108.0 541.6,108.3 542.3,108.8 543.0,108.2 543.7,107.8 544.4,107.0 545.1,106.9 545.8,107.9 546.5,108.1 547.2,108.4 547.9,108.4 548.6,108.8 549.4,108.3 550.1,108.0 550.8,107.7 551.5,107.3 552.2,107.4 552.9,108.2 553.6,108.5 554.3,108.5 555.0,107.8 555.7,108.3 556.5,108.4 557.2,108.3 557.9,108.2 558.6,108.1 559.3,107.3 560.0,108.3 560.6,234.5 561.3,236.1 562.0,235.8 562.7,236.0 563.4,235.5 564.1,235.7 564.8,235.6 565.5,235.7 566.2,236.5 566.9,236.7 567.6,236.5 568.4,235.8 569.1,236.6 569.8,236.2 570.5,236.7 571.2,236.5 571.9,236.1 572.6,235.9 573.3,236.1 574.0,235.4 574.7,236.2 575.4,236.6 576.1,236.3 576.8,236.1 577.5,235.3 578.2,235.6 578.9,236.6 579.6,236.5 580.3,236.3 581.0,236.4 581.7,235.5 582.4,235.9 583.1,236.3 583.9,236.1 584.6,236.5 585.3,236.1 586.0,236.3 586.7,236.2 587.4,236.9 588.1,236.6 588.8,236.6 589.5,236.2 590.2,236.2 590.9,236.7 591.6,237.2 592.3,236.1 593.0,235.4 593.7,235.9 594.4,236.1 595.1,235.9 595.8,236.4 596.5,235.1 597.2,235.6 597.9,235.3 598.6,236.1 599.4,235.8 600.1,236.7 600.8,236.0 601.5,236.1 602.2,236.0 602.9,235.4 603.6,235.8 604.3,236.5 605.0,235.6 605.7,236.4 606.4,236.4 607.0,101.5 607.7,106.0 608.4,107.4 609.1,108.1 609.8,107.8 610.5,108.5 611.3,108.0 612.0,108.3 612.7,107.5 613.4,107.3 614.1,107.1 614.8,107.2 615.5,107.3 616.2,107.4 616.9,107.6 617.6,107.1 618.4,108.0 619.1,107.4 619.8,107.4 620.5,108.1 621.2,107.5 621.9,108.5 622.6,108.1 623.3,108.6 624.0,107.8 624.7,107.2 625.4,108.2 626.2,108.3 626.9,108.8 627.6,107.3 628.3,108.3 629.0,108.5 629.7,109.1 630.4,108.3 631.1,108.7 631.8,108.3 632.5,107.9 633.3,108.3 634.0,108.7 634.7,108.1 635.4,107.5 636.1,107.3 636.8,107.4 637.5,107.9 638.2,108.0 638.9,107.6 639.6,108.1 640.3,108.2 641.1,108.9 641.8,107.7 642.5,108.6 643.2,108.1 643.9,109.2 644.6,108.1 645.3,108.2 646.0,107.0 646.7,107.4 647.4,108.1 648.2,108.2 648.9,107.0 649.6,107.0 650.3,107.1 651.0,108.4 651.7,107.9 652.3,234.5 653.0,236.2 653.7,236.1 654.4,235.9 655.1,236.6 655.8,237.1 656.5,236.6 657.2,236.0 657.9,235.5 658.6,235.8 659.3,236.1 660.1,236.0 660.8,236.3 661.5,236.5 662.2,235.6 662.9,235.8 663.6,235.7 664.3,235.4 665.0,235.6 665.7,236.6 666.4,236.2 667.1,236.2 667.8,235.8 668.5,235.8 669.2,235.7 669.9,235.8 670.6,235.4 671.3,235.4 672.0,235.9 672.7,235.7 673.4,235.6 674.1,236.0 674.8,235.9 675.6,236.5 676.3,236.5 677.0,235.8 677.7,236.4 678.4,236.6 679.1,235.9 679.8,235.6 680.5,235.3 681.2,235.6 681.9,235.3 682.6,235.3 683.3,236.0 684.0,236.1 684.7,235.5 685.4,235.8 686.1,235.9 686.8,236.8 687.5,236.4 688.2,236.0 688.9,236.0 689.6,236.0 690.3,236.1 691.1,235.3 691.8,235.1 692.5,235.3 693.2,235.1 693.9,234.8 694.6,235.8 695.3,236.0 696.0,235.9 696.7,236.2 697.4,235.9 698.1,236.5 698.7,101.5 699.4,106.0 700.1,107.2 700.8,107.5 701.5,108.2 702.2,109.1 703.0,109.1 703.7,109.0 704.4,108.2 705.1,108.6 705.8,108.5 706.5,108.5 707.2,108.3 707.9,108.3 708.6,108.6 709.3,108.5 710.1,107.7 710.8,108.0 711.5,108.2 712.2,107.7 712.9,107.5 713.6,106.9 714.3,107.8 715.0,107.5 715.7,107.1 716.4,107.6 717.1,107.8 717.9,107.3 718.6,108.1 719.3,108.4 720.0,108.0 720.7,107.9 721.4,108.2 722.1,107.6 722.8,107.7 723.5,108.0 724.2,108.0 725.0,107.3 725.7,107.9 726.4,108.0 727.1,108.1 727.8,108.5 728.5,108.3 729.2,108.5 729.9,108.0 730.6,108.4 731.3,107.1 732.0,107.8 732.8,107.8 733.5,107.8 734.2,107.4 734.9,107.4 735.6,108.2 736.3,107.9 737.0,108.2 737.7,108.3 738.4,108.1 739.1,107.2 739.9,107.5 740.6,108.0 741.3,108.0 742.0,107.6 742.7,108.0 743.4,107.9 744.0,234.5 744.7,236.1 745.4,236.1 746.1,236.1 746.8,235.9 747.5,235.5 748.2,235.7 748.9,235.4 749.6,235.9 750.3,235.8 751.0,235.8 751.8,235.6 752.5,235.1 753.2,235.7 753.9,236.1 754.6,236.0 755.3,236.3 756.0,236.2 756.7,236.9 757.4,236.6 758.1,236.8 758.8,236.2 759.5,235.9 760.2,236.2 760.9,236.7 761.6,236.7 762.3,236.1 763.0,235.6 763.7,236.0 764.4,236.6 765.1,236.1 765.8,236.7 766.5,236.0 767.3,235.9 768.0,236.0 768.7,235.7 769.4,235.9 770.1,236.7 770.8,236.2 771.5,236.3 772.2,235.9 772.9,236.3 773.6,236.3 774.3,235.8 775.0,235.3 775.7,235.8 776.4,236.0 777.1,235.5 777.8,235.6 778.5,235.9 779.2,235.6 779.9,236.0 780.6,236.2 781.3,235.9 782.0,235.7 782.8,236.1 783.5,236.7 784.2,236.6 784.9,235.9 785.6,235.6 786.3,236.3 787.0,235.9 787.7,236.2 788.4,236.1 789.1,235.5 789.8,235.5 790.4,101.5 791.1,106.0 791.8,107.6 792.5,108.7 793.2,109.2 793.9,108.1 794.7,107.2 795.4,108.3 796.1,107.9 796.8,108.6 797.5,108.2 798.2,108.0 798.9,107.4 799.6,107.4 800.3,108.5 801.0,108.2 801.8,108.6 802.5,107.8 803.2,107.9 803.9,108.0 804.6,108.8 805.3,107.9 806.0,107.8 806.7,108.4 807.4,108.1 808.1,107.9 808.8,107.2 809.6,107.6 810.3,108.1 811.0,108.4 811.7,107.8 812.4,108.0 813.1,106.9 813.8,107.7 814.5,107.6 815.2,108.0 815.9,107.4 816.7,108.3 817.4,107.9 818.1,108.6 818.8,107.5 819.5,107.2 820.2,107.6 820.9,107.1 821.6,108.2 822.3,108.2 823.0,108.5 823.7,108.1 824.5,108.5 825.2,108.3 825.9,108.1 826.6,107.0 827.3,106.9 828.0,108.0 828.7,108.4 829.4,108.7 830.1,107.9 830.8,108.6 831.6,108.2 832.3,107.8 833.0,107.9 833.7,108.1 834.4,107.8 835.1,107.9 835.7,234.5 836.4,236.6 837.1,235.9 837.8,235.1 838.5,235.5 839.3,235.8 840.0,235.6 840.7,236.2 841.4,235.2 842.1,236.5 842.8,236.3 843.5,236.7 844.2,236.0 845.0,235.7 845.7,235.8 846.4,236.5 847.1,236.8 847.8,237.5 848.5,236.7 849.2,235.8 849.9,235.3 850.7,235.9 851.4,236.4 852.1,235.8 852.8,236.4 853.5,236.6 854.2,235.7 854.9,235.5 855.6,236.4 856.4,237.0 857.1,236.7 857.8,236.4 858.5,236.4 859.2,236.0 859.9,235.7 860.6,236.2 861.3,236.4 862.0,236.4 862.8,236.6 863.5,235.6 864.2,235.9 864.9,235.7 865.6,235.3 866.3,236.5 867.0,236.4 867.7,235.4 868.5,234.8 869.2,235.6 869.9,236.1 870.6,236.1 871.3,236.3 872.0,236.6 872.7,236.1 873.4,235.8 874.2,236.2 874.9,235.2 875.6,235.9 876.3,235.6 877.0,235.9 877.7,235.3 878.4,236.5 879.1,236.5 879.9,236.7 880.6,235.7 881.3,235.2 882.0,235.6 882.7,235.2 882.0,236.0 882.3,101.5" fill="none" stroke="#e6dc28" stroke-width="1.1" stroke-linejoin="round"/><g stroke="#ffffff" stroke-opacity="0.125" stroke-width="1" fill="none"><line x1="48.40" y1="343.50" x2="48.40" y2="519.80"/><line x1="87.20" y1="343.50" x2="87.20" y2="519.80"/><line x1="126.00" y1="343.50" x2="126.00" y2="519.80"/><line x1="164.80" y1="343.50" x2="164.80" y2="519.80"/><line x1="203.60" y1="343.50" x2="203.60" y2="519.80"/><line x1="242.40" y1="343.50" x2="242.40" y2="519.80"/><line x1="281.20" y1="343.50" x2="281.20" y2="519.80"/><line x1="320.00" y1="343.50" x2="320.00" y2="519.80"/><line x1="358.80" y1="343.50" x2="358.80" y2="519.80"/><line x1="397.60" y1="343.50" x2="397.60" y2="519.80"/><line x1="436.40" y1="343.50" x2="436.40" y2="519.80"/><line x1="45.90" y1="343.50" x2="436.40" y2="343.50"/><line x1="45.90" y1="360.88" x2="436.40" y2="360.88"/><line x1="45.90" y1="378.26" x2="436.40" y2="378.26"/><line x1="45.90" y1="395.64" x2="436.40" y2="395.64"/><line x1="45.90" y1="413.02" x2="436.40" y2="413.02"/><line x1="45.90" y1="430.40" x2="436.40" y2="430.40"/><line x1="45.90" y1="447.78" x2="436.40" y2="447.78"/><line x1="45.90" y1="465.16" x2="436.40" y2="465.16"/><line x1="45.90" y1="482.54" x2="436.40" y2="482.54"/><line x1="45.90" y1="499.92" x2="436.40" y2="499.92"/><line x1="45.90" y1="517.30" x2="436.40" y2="517.30"/><rect x="48.40" y="343.50" width="388.00" height="173.80" stroke-opacity="0.11"/></g><polyline points="48.7,361.6 49.4,361.2 50.1,361.6 50.8,361.9 51.5,362.6 52.2,362.2 52.9,362.1 53.6,361.0 54.3,361.2 55.0,362.2 55.7,361.9 56.4,361.8 57.1,361.9 57.8,362.9 58.6,362.3 59.3,362.3 60.0,361.8 60.7,362.7 61.4,361.4 62.1,361.9 62.8,362.0 63.5,361.8 64.2,362.2 64.9,361.4 65.6,361.9 66.3,362.4 67.0,361.8 67.7,362.5 68.4,362.1 69.1,362.2 69.8,361.8 70.5,362.2 71.2,362.6 71.9,363.0 72.6,362.0 73.3,361.5 74.0,361.5 74.7,361.2 75.4,361.6 76.1,362.2 76.9,361.4 77.6,362.4 78.3,361.7 79.0,361.3 79.7,360.3 80.4,361.4 81.1,362.0 81.8,361.9 82.5,362.4 83.2,361.6 83.9,360.7 84.6,360.9 85.3,360.6 86.0,360.9 86.6,469.2 87.3,467.7 88.0,466.4 88.7,467.7 89.4,466.3 90.1,467.1 90.8,466.1 91.5,467.6 92.2,466.8 92.9,466.8 93.6,465.7 94.3,465.8 95.0,467.4 95.7,468.5 96.4,467.7 97.1,466.2 97.8,467.9 98.5,466.6 99.2,467.0 99.9,466.1 100.6,466.5 101.3,467.7 102.0,466.4 102.7,467.7 103.4,467.9 104.1,468.1 104.8,467.8 105.5,469.5 106.2,469.3 106.9,468.9 107.6,467.6 108.3,468.5 109.1,468.6 109.8,468.7 110.5,468.7 111.2,468.6 111.9,469.1 112.6,469.3 113.3,469.4 114.0,468.7 114.7,468.6 115.4,469.1 116.1,468.3 116.8,468.2 117.5,468.1 118.2,467.6 118.9,470.0 119.6,469.9 120.3,469.5 121.0,469.4 121.7,470.0 122.4,469.9 123.1,469.1 123.8,469.7 124.5,468.8 125.2,468.7 125.9,470.5 126.6,469.8 127.3,470.7 128.0,469.8 128.7,470.2 129.4,470.4 130.1,471.6 130.7,354.8 131.4,359.7 132.1,361.4 132.8,361.9 133.5,361.0 134.2,361.3 135.0,361.7 135.7,362.2 136.4,361.7 137.1,361.6 137.8,362.1 138.5,361.5 139.2,361.3 139.9,361.8 140.6,361.9 141.4,361.8 142.1,361.6 142.8,361.4 143.5,360.6 144.2,361.0 144.9,361.4 145.6,361.9 146.3,361.6 147.0,361.7 147.7,361.3 148.4,361.7 149.2,361.7 149.9,362.0 150.6,362.0 151.3,363.0 152.0,361.7 152.7,362.0 153.4,360.8 154.1,360.8 154.8,361.9 155.6,361.9 156.3,362.0 157.0,362.1 157.7,362.7 158.4,361.6 159.1,361.7 159.8,362.4 160.5,362.1 161.2,362.9 161.9,361.4 162.6,361.7 163.4,362.2 164.1,362.3 164.8,362.6 165.5,362.1 166.2,362.5 166.9,362.9 167.6,362.5 168.3,362.3 169.0,362.7 169.8,362.1 170.5,361.5 171.2,361.0 171.9,360.7 172.6,361.6 173.3,361.4 173.9,478.9 174.6,477.0 175.3,476.3 176.0,476.3 176.7,475.8 177.4,476.0 178.2,476.4 178.9,477.4 179.6,476.0 180.3,475.6 181.0,475.6 181.7,475.5 182.4,477.2 183.1,475.8 183.8,475.7 184.5,477.0 185.3,477.1 186.0,477.5 186.7,475.9 187.4,476.7 188.1,476.7 188.8,478.3 189.5,478.2 190.2,478.4 190.9,478.5 191.6,479.9 192.4,478.1 193.1,479.4 193.8,479.7 194.5,479.1 195.2,477.7 195.9,478.2 196.6,477.8 197.3,477.3 198.0,476.8 198.7,475.7 199.5,477.0 200.2,478.5 200.9,478.6 201.6,477.4 202.3,478.1 203.0,479.3 203.7,479.7 204.4,478.4 205.1,478.5 205.8,478.5 206.6,478.3 207.3,480.8 208.0,479.0 208.7,480.4 209.4,481.0 210.1,481.3 210.8,481.8 211.5,479.9 212.2,481.4 212.9,481.3 213.7,481.3 214.4,479.9 215.1,480.1 215.8,480.1 216.5,481.7 217.2,480.5 217.8,354.8 218.5,359.7 219.2,362.6 219.9,362.5 220.6,361.7 221.4,361.9 222.1,361.1 222.8,361.8 223.5,362.0 224.2,361.3 224.9,361.7 225.6,362.0 226.3,361.7 227.1,362.4 227.8,362.5 228.5,361.9 229.2,362.4 229.9,362.3 230.6,361.8 231.3,361.6 232.0,361.3 232.7,361.9 233.5,362.0 234.2,361.7 234.9,362.5 235.6,362.3 236.3,362.2 237.0,363.1 237.7,362.4 238.4,362.4 239.2,362.7 239.9,362.1 240.6,362.1 241.3,363.1 242.0,361.6 242.7,362.1 243.4,362.8 244.1,361.9 244.8,362.3 245.6,361.4 246.3,362.4 247.0,361.6 247.7,362.4 248.4,362.0 249.1,362.5 249.8,362.3 250.5,361.6 251.2,361.8 252.0,361.3 252.7,361.0 253.4,361.0 254.1,361.4 254.8,361.1 255.5,361.5 256.2,360.7 256.9,360.7 257.7,362.0 258.4,361.5 259.1,361.7 259.8,361.7 260.5,362.4 261.1,489.6 261.8,487.3 262.5,486.8 263.2,488.2 263.9,488.6 264.6,488.2 265.3,487.7 266.0,487.2 266.8,486.3 267.5,487.3 268.2,486.9 268.9,487.5 269.6,487.3 270.3,487.0 271.0,488.8 271.7,488.2 272.4,488.9 273.1,490.2 273.8,488.4 274.5,488.0 275.2,487.4 275.9,487.8 276.6,489.4 277.4,488.9 278.1,488.7 278.8,489.8 279.5,489.4 280.2,490.2 280.9,488.3 281.6,489.6 282.3,487.7 283.0,490.0 283.7,489.5 284.4,489.0 285.1,490.4 285.8,489.8 286.5,490.1 287.2,489.5 287.9,490.0 288.7,489.9 289.4,489.0 290.1,489.0 290.8,489.3 291.5,490.3 292.2,490.0 292.9,489.9 293.6,489.3 294.3,489.4 295.0,490.1 295.7,490.3 296.4,490.0 297.1,490.2 297.8,490.5 298.5,489.5 299.3,492.2 300.0,492.0 300.7,491.4 301.4,491.1 302.1,491.3 302.8,491.1 303.5,490.8 304.2,491.3 304.8,354.8 305.5,359.7 306.2,361.7 306.9,362.1 307.6,362.2 308.3,361.2 309.0,360.8 309.7,361.3 310.4,360.7 311.1,360.7 311.8,361.3 312.6,361.1 313.3,361.5 314.0,361.8 314.7,362.8 315.4,361.9 316.1,361.7 316.8,361.9 317.5,362.5 318.2,362.6 318.9,362.4 319.6,361.5 320.3,362.3 321.0,361.7 321.7,362.4 322.4,362.2 323.1,362.0 323.8,361.5 324.5,361.6 325.2,360.9 325.9,361.6 326.7,361.3 327.4,362.0 328.1,361.5 328.8,361.6 329.5,361.4 330.2,362.5 330.9,362.2 331.6,362.0 332.3,362.1 333.0,361.7 333.7,362.5 334.4,362.4 335.1,362.0 335.8,361.5 336.5,360.8 337.2,362.1 337.9,362.0 338.6,362.9 339.3,361.2 340.0,361.4 340.8,361.3 341.5,361.7 342.2,361.6 342.9,362.1 343.6,361.9 344.3,361.8 345.0,361.5 345.7,362.2 346.4,361.8 347.1,362.1 347.8,361.9 348.4,498.5 349.1,497.0 349.8,497.2 350.5,496.7 351.2,496.5 351.9,496.0 352.7,496.6 353.4,495.6 354.1,495.9 354.8,496.3 355.5,495.0 356.2,495.4 356.9,496.7 357.6,496.9 358.3,497.1 359.0,497.2 359.7,497.8 360.4,497.0 361.2,497.0 361.9,497.1 362.6,495.6 363.3,496.0 364.0,497.0 364.7,498.1 365.4,498.3 366.1,496.8 366.8,497.1 367.5,496.7 368.2,496.3 368.9,496.2 369.6,496.9 370.4,497.1 371.1,498.7 371.8,498.5 372.5,497.1 373.2,497.9 373.9,498.6 374.6,498.5 375.3,498.5 376.0,498.2 376.7,499.2 377.4,497.9 378.1,499.5 378.9,500.4 379.6,499.3 380.3,500.1 381.0,499.4 381.7,498.5 382.4,499.1 383.1,500.5 383.8,499.3 384.5,498.9 385.2,497.1 385.9,497.8 386.6,498.9 387.4,499.2 388.1,499.8 388.8,500.0 389.5,500.6 390.2,500.1 390.9,501.5 391.5,354.8 392.2,359.7 392.9,361.9 393.6,362.4 394.3,362.3 395.0,361.9 395.7,361.7 396.4,361.5 397.1,361.4 397.8,361.5 398.5,361.5 399.2,362.1 399.9,362.4 400.6,362.3 401.3,361.8 402.0,362.1 402.7,361.4 403.4,361.2 404.1,361.5 404.8,361.9 405.5,362.0 406.2,361.7 406.9,361.5 407.6,362.1 408.3,362.0 409.0,362.0 409.7,362.1 410.4,362.0 411.1,362.5 411.8,361.9 412.5,361.6 413.2,361.8 414.0,361.2 414.7,361.0 415.4,361.3 416.1,361.3 416.8,362.0 417.5,361.8 418.2,361.8 418.9,362.0 419.6,361.8 420.3,361.8 421.0,362.1 421.7,362.5 422.4,363.2 423.1,361.8 423.8,362.2 424.5,361.9 425.2,362.2 425.9,361.8 426.6,361.7 427.3,362.2 428.0,361.7 428.7,362.2 429.4,362.0 430.1,361.9 430.8,361.6 431.5,362.0 432.2,361.1 432.9,361.4 433.6,363.0 434.3,362.8 435.0,362.5 435.6,512.0 436.1,508.8" fill="none" stroke="#e6dc28" stroke-width="1.1" stroke-linejoin="round"/><g stroke="#ffffff" stroke-opacity="0.125" stroke-width="1" fill="none"><line x1="496.00" y1="343.50" x2="496.00" y2="519.80"/><line x1="534.62" y1="343.50" x2="534.62" y2="519.80"/><line x1="573.24" y1="343.50" x2="573.24" y2="519.80"/><line x1="611.86" y1="343.50" x2="611.86" y2="519.80"/><line x1="650.48" y1="343.50" x2="650.48" y2="519.80"/><line x1="689.10" y1="343.50" x2="689.10" y2="519.80"/><line x1="727.72" y1="343.50" x2="727.72" y2="519.80"/><line x1="766.34" y1="343.50" x2="766.34" y2="519.80"/><line x1="804.96" y1="343.50" x2="804.96" y2="519.80"/><line x1="843.58" y1="343.50" x2="843.58" y2="519.80"/><line x1="882.20" y1="343.50" x2="882.20" y2="519.80"/><line x1="493.50" y1="343.50" x2="882.20" y2="343.50"/><line x1="493.50" y1="360.88" x2="882.20" y2="360.88"/><line x1="493.50" y1="378.26" x2="882.20" y2="378.26"/><line x1="493.50" y1="395.64" x2="882.20" y2="395.64"/><line x1="493.50" y1="413.02" x2="882.20" y2="413.02"/><line x1="493.50" y1="430.40" x2="882.20" y2="430.40"/><line x1="493.50" y1="447.78" x2="882.20" y2="447.78"/><line x1="493.50" y1="465.16" x2="882.20" y2="465.16"/><line x1="493.50" y1="482.54" x2="882.20" y2="482.54"/><line x1="493.50" y1="499.92" x2="882.20" y2="499.92"/><line x1="493.50" y1="517.30" x2="882.20" y2="517.30"/><rect x="496.00" y="343.50" width="386.20" height="173.80" stroke-opacity="0.11"/></g><polyline points="496.3,362.1 497.0,361.1 497.7,360.6 498.4,361.5 499.1,361.9 499.8,361.8 500.6,361.5 501.3,361.5 502.0,361.4 502.7,361.9 503.4,360.9 504.1,360.6 504.8,361.1 505.5,361.3 506.2,361.4 506.9,361.5 507.7,362.2 508.4,361.8 509.1,361.6 509.8,362.4 510.5,361.4 511.2,361.2 511.9,361.3 512.6,361.9 513.3,362.2 514.0,362.2 514.8,361.6 515.5,361.4 516.2,360.8 516.9,361.3 517.6,361.5 518.3,361.6 519.0,361.1 519.7,361.0 520.4,361.8 521.1,361.8 521.8,362.4 522.6,362.6 523.3,362.5 524.0,362.5 524.7,361.9 525.4,361.7 526.1,362.0 526.8,362.2 527.5,361.8 528.2,361.2 528.9,361.1 529.7,361.6 530.4,361.3 531.1,362.2 531.8,361.5 532.5,360.9 533.2,362.4 533.8,505.0 534.5,502.0 535.2,501.9 535.9,501.5 536.6,502.9 537.4,502.3 538.1,501.2 538.8,500.6 539.5,500.1 540.2,499.4 540.9,500.3 541.6,501.6 542.3,501.1 543.1,501.1 543.8,500.7 544.5,499.9 545.2,499.9 545.9,498.4 546.6,499.8 547.3,499.7 548.0,499.5 548.7,499.1 549.5,498.7 550.2,499.5 550.9,499.0 551.6,499.7 552.3,499.1 553.0,498.6 553.7,499.3 554.4,497.8 555.1,498.7 555.9,498.6 556.6,498.8 557.3,499.0 558.0,498.7 558.7,498.3 559.4,499.3 560.1,498.6 560.8,499.3 561.6,498.4 562.3,498.5 563.0,498.8 563.7,499.3 564.4,496.8 565.1,497.1 565.8,497.7 566.5,497.7 567.2,497.9 568.0,498.2 568.7,497.4 569.4,497.8 570.1,497.7 570.8,497.3 571.5,497.5 572.2,498.4 572.9,497.9 573.7,498.1 574.4,496.5 575.1,495.4 575.8,495.0 576.5,495.5 577.1,354.8 577.8,359.7 578.5,362.1 579.2,360.8 579.9,361.4 580.6,361.6 581.3,361.6 582.0,361.3 582.7,362.1 583.4,361.6 584.1,361.6 584.9,361.6 585.6,361.4 586.3,361.9 587.0,362.0 587.7,360.8 588.4,360.9 589.1,362.2 589.8,361.9 590.5,363.1 591.2,362.1 591.9,361.0 592.6,361.6 593.3,361.7 594.0,360.8 594.7,361.7 595.4,362.2 596.1,361.0 596.8,361.5 597.5,361.1 598.2,362.1 599.0,362.5 599.7,362.3 600.4,362.1 601.1,362.2 601.8,362.2 602.5,361.6 603.2,360.7 603.9,360.4 604.6,361.0 605.3,361.1 606.0,361.5 606.7,362.0 607.4,362.4 608.1,362.2 608.8,362.4 609.5,361.8 610.2,362.2 610.9,362.3 611.6,361.9 612.3,362.0 613.1,362.4 613.8,362.5 614.5,362.5 615.2,362.2 615.9,362.1 616.6,361.9 617.3,361.4 618.0,361.6 618.7,361.7 619.4,361.2 620.1,361.6 620.7,494.0 621.4,492.7 622.1,491.1 622.8,490.9 623.5,489.5 624.2,489.2 624.9,489.7 625.6,489.0 626.3,489.0 627.0,489.7 627.7,489.4 628.5,489.4 629.2,489.9 629.9,489.2 630.6,488.3 631.3,487.5 632.0,488.5 632.7,489.4 633.4,488.1 634.1,489.6 634.8,487.3 635.5,486.5 636.2,487.2 636.9,488.7 637.6,487.7 638.3,487.7 639.0,487.0 639.7,486.0 640.4,487.2 641.1,487.9 641.8,487.1 642.6,484.4 643.3,484.6 644.0,485.1 644.7,485.8 645.4,486.8 646.1,485.5 646.8,485.3 647.5,484.3 648.2,484.4 648.9,485.3 649.6,483.7 650.3,484.2 651.0,483.0 651.7,483.3 652.4,482.1 653.1,482.6 653.8,482.5 654.5,483.1 655.2,482.4 655.9,483.3 656.7,483.4 657.4,480.4 658.1,481.9 658.8,482.4 659.5,482.6 660.2,482.2 660.9,482.4 661.6,482.4 662.3,482.9 663.0,482.1 663.7,481.4 664.3,354.8 665.0,359.7 665.7,361.7 666.4,361.4 667.1,361.6 667.8,361.6 668.6,362.0 669.3,361.4 670.0,361.8 670.7,361.6 671.4,362.2 672.1,362.1 672.8,362.1 673.5,361.7 674.2,361.6 675.0,361.2 675.7,361.1 676.4,361.3 677.1,361.3 677.8,362.3 678.5,362.0 679.2,362.6 679.9,362.5 680.6,361.9 681.3,361.8 682.0,361.9 682.8,361.9 683.5,361.5 684.2,362.0 684.9,361.7 685.6,361.8 686.3,361.9 687.0,362.0 687.7,361.5 688.4,361.3 689.2,361.3 689.9,361.3 690.6,362.3 691.3,361.7 692.0,363.0 692.7,362.1 693.4,362.0 694.1,362.1 694.8,362.2 695.5,362.3 696.2,361.6 697.0,362.2 697.7,361.9 698.4,361.9 699.1,361.9 699.8,361.3 700.5,361.1 701.2,360.7 701.9,361.2 702.6,360.7 703.4,361.4 704.1,361.7 704.8,362.0 705.5,361.6 706.2,361.7 706.9,361.6 707.5,478.0 708.2,475.3 708.9,474.1 709.6,475.1 710.3,473.8 711.0,472.8 711.7,473.0 712.4,473.4 713.1,473.9 713.8,473.1 714.5,474.5 715.3,474.0 716.0,473.4 716.7,473.7 717.4,473.3 718.1,473.6 718.8,473.4 719.5,471.7 720.2,471.8 720.9,472.5 721.6,471.9 722.3,471.2 723.0,471.2 723.7,472.1 724.4,469.5 725.1,471.7 725.8,471.5 726.5,470.1 727.2,469.9 727.9,470.1 728.6,470.3 729.4,470.7 730.1,470.5 730.8,469.5 731.5,470.1 732.2,470.9 732.9,470.7 733.6,470.1 734.3,470.9 735.0,468.4 735.7,469.5 736.4,468.9 737.1,468.8 737.8,469.7 738.5,470.0 739.2,470.0 739.9,468.1 740.6,468.2 741.3,468.2 742.0,467.2 742.7,467.5 743.5,467.7 744.2,467.5 744.9,466.8 745.6,468.3 746.3,468.1 747.0,469.3 747.7,468.1 748.4,466.6 749.1,467.5 749.8,467.5 750.5,466.8 751.1,354.8 751.8,359.7 752.5,362.4 753.2,362.3 753.9,361.4 754.6,362.1 755.3,361.6 756.1,361.7 756.8,361.8 757.5,361.6 758.2,361.6 758.9,362.2 759.6,361.7 760.3,362.0 761.0,361.9 761.7,361.3 762.4,361.6 763.1,362.1 763.8,362.4 764.6,362.7 765.3,362.3 766.0,362.1 766.7,362.1 767.4,362.6 768.1,362.9 768.8,361.8 769.5,362.0 770.2,361.3 770.9,361.1 771.6,361.0 772.3,361.9 773.1,362.2 773.8,361.8 774.5,361.4 775.2,361.7 775.9,361.8 776.6,361.4 777.3,362.3 778.0,362.2 778.7,362.0 779.4,361.9 780.1,362.5 780.8,362.3 781.6,362.2 782.3,361.7 783.0,361.9 783.7,361.6 784.4,361.3 785.1,361.5 785.8,361.8 786.5,361.6 787.2,362.0 787.9,362.9 788.6,361.8 789.3,361.4 790.1,361.1 790.8,361.0 791.5,361.2 792.2,360.2 792.9,360.4 793.6,361.9 794.3,361.4 794.9,463.3 795.6,459.9 796.3,459.9 797.0,460.2 797.7,460.6 798.4,458.8 799.1,460.0 799.9,459.5 800.6,460.1 801.3,459.4 802.0,460.0 802.7,459.5 803.4,459.6 804.1,459.2 804.8,458.8 805.5,457.7 806.2,458.3 806.9,457.7 807.6,457.2 808.4,456.9 809.1,457.5 809.8,456.1 810.5,456.7 811.2,456.1 811.9,455.9 812.6,455.4 813.3,456.4 814.0,456.6 814.7,455.7 815.4,454.7 816.2,455.0 816.9,454.8 817.6,454.3 818.3,456.3 819.0,455.4 819.7,455.6 820.4,455.0 821.1,454.8 821.8,453.7 822.5,453.7 823.2,453.8 823.9,454.3 824.7,453.3 825.4,452.6 826.1,453.4 826.8,452.6 827.5,452.9 828.2,451.9 828.9,451.0 829.6,451.1 830.3,449.8 831.0,451.7 831.7,451.1 832.4,451.4 833.2,450.2 833.9,451.3 834.6,450.7 835.3,448.8 836.0,449.1 836.7,449.5 837.4,448.4 838.0,354.8 838.7,359.7 839.4,362.5 840.1,362.4 840.8,362.6 841.5,362.8 842.2,362.5 842.9,362.6 843.6,361.9 844.3,361.9 845.0,362.2 845.8,361.1 846.5,361.9 847.2,361.3 847.9,360.6 848.6,360.9 849.3,361.2 850.0,361.5 850.7,360.6 851.4,361.8 852.1,360.9 852.8,361.6 853.5,361.5 854.2,361.1 854.9,361.0 855.6,361.5 856.3,362.0 857.0,361.9 857.7,361.6 858.4,361.1 859.1,361.9 859.9,362.5 860.6,362.4 861.3,362.3 862.0,361.7 862.7,362.1 863.4,361.8 864.1,361.9 864.8,362.0 865.5,361.9 866.2,361.0 866.9,361.1 867.6,361.5 868.3,361.0 869.0,361.9 869.7,362.0 870.4,362.2 871.1,361.9 871.8,361.1 872.5,361.2 873.2,360.9 874.0,361.7 874.7,362.5 875.4,361.2 876.1,361.6 876.8,361.6 877.5,361.0 878.2,362.3 878.9,361.2 879.6,361.4 880.3,361.6 881.0,362.0 881.6,448.5 881.9,444.5" fill="none" stroke="#e6dc28" stroke-width="1.1" stroke-linejoin="round"/></svg>
<div class="yl" style="left:0.5px;width:24.9px;top:64px;transform:translateY(0.65px)">80.6</div><div class="yl" style="left:0.5px;width:24.9px;top:81px;transform:translateY(0.96px)">73.6</div><div class="yl" style="left:0.5px;width:24.9px;top:99px;transform:translateY(0.27px)">66.5</div><div class="yl" style="left:0.5px;width:24.9px;top:116px;transform:translateY(0.58px)">59.5</div><div class="yl" style="left:0.5px;width:24.9px;top:133px;transform:translateY(0.89px)">52.4</div><div class="yl" style="left:0.5px;width:24.9px;top:151px;transform:translateY(0.20px)">45.3</div><div class="yl" style="left:0.5px;width:24.9px;top:168px;transform:translateY(0.51px)">38.3</div><div class="yl" style="left:0.5px;width:24.9px;top:185px;transform:translateY(0.82px)">31.2</div><div class="yl" style="left:0.5px;width:24.9px;top:203px;transform:translateY(0.13px)">24.1</div><div class="yl" style="left:0.5px;width:24.9px;top:220px;transform:translateY(0.44px)">17.1</div><div class="yl" style="left:0.5px;width:24.9px;top:237px;transform:translateY(0.75px)">10.0</div><div class="yl" style="left:447.5px;width:24.9px;top:64px;transform:translateY(0.55px)">12.6</div><div class="yl" style="left:447.5px;width:24.9px;top:81px;transform:translateY(0.85px)">11.3</div><div class="yl" style="left:447.5px;width:24.9px;top:99px;transform:translateY(0.15px)">10.0</div><div class="yl" style="left:447.5px;width:24.9px;top:116px;transform:translateY(0.45px)">8.7</div><div class="yl" style="left:447.5px;width:24.9px;top:133px;transform:translateY(0.75px)">7.4</div><div class="yl" style="left:447.5px;width:24.9px;top:151px;transform:translateY(0.05px)">6.0</div><div class="yl" style="left:447.5px;width:24.9px;top:168px;transform:translateY(0.35px)">4.7</div><div class="yl" style="left:447.5px;width:24.9px;top:185px;transform:translateY(0.65px)">3.4</div><div class="yl" style="left:447.5px;width:24.9px;top:202px;transform:translateY(0.95px)">2.1</div><div class="yl" style="left:447.5px;width:24.9px;top:220px;transform:translateY(0.25px)">0.8</div><div class="yl" style="left:447.5px;width:24.9px;top:237px;transform:translateY(0.55px)">-0.5</div><div class="yl" style="left:0.5px;width:45.4px;top:337px;transform:translateY(0.90px)">7108.1</div><div class="yl" style="left:0.5px;width:45.4px;top:355px;transform:translateY(0.26px)">10.0</div><div class="yl" style="left:0.5px;width:45.4px;top:372px;transform:translateY(0.61px)">-7088.1</div><div class="yl" style="left:0.5px;width:45.4px;top:389px;transform:translateY(0.97px)">-14186.1</div><div class="yl" style="left:0.5px;width:45.4px;top:407px;transform:translateY(0.32px)">-21284.2</div><div class="yl" style="left:0.5px;width:45.4px;top:424px;transform:translateY(0.68px)">-28382.2</div><div class="yl" style="left:0.5px;width:45.4px;top:442px;transform:translateY(0.03px)">-35480.3</div><div class="yl" style="left:0.5px;width:45.4px;top:459px;transform:translateY(0.38px)">-42578.4</div><div class="yl" style="left:0.5px;width:45.4px;top:476px;transform:translateY(0.74px)">-49676.4</div><div class="yl" style="left:0.5px;width:45.4px;top:494px;transform:translateY(0.09px)">-56774.5</div><div class="yl" style="left:0.5px;width:45.4px;top:511px;transform:translateY(0.45px)">-63872.6</div><div class="yl" style="left:447.5px;width:45.4px;top:337px;transform:translateY(0.90px)">5926.9</div><div class="yl" style="left:447.5px;width:45.4px;top:355px;transform:translateY(0.26px)">10.0</div><div class="yl" style="left:447.5px;width:45.4px;top:372px;transform:translateY(0.61px)">-5906.9</div><div class="yl" style="left:447.5px;width:45.4px;top:389px;transform:translateY(0.97px)">-11823.7</div><div class="yl" style="left:447.5px;width:45.4px;top:407px;transform:translateY(0.32px)">-17740.6</div><div class="yl" style="left:447.5px;width:45.4px;top:424px;transform:translateY(0.68px)">-23657.4</div><div class="yl" style="left:447.5px;width:45.4px;top:442px;transform:translateY(0.03px)">-29574.3</div><div class="yl" style="left:447.5px;width:45.4px;top:459px;transform:translateY(0.38px)">-35491.1</div><div class="yl" style="left:447.5px;width:45.4px;top:476px;transform:translateY(0.74px)">-41408.0</div><div class="yl" style="left:447.5px;width:45.4px;top:494px;transform:translateY(0.09px)">-47324.8</div><div class="yl" style="left:447.5px;width:45.4px;top:511px;transform:translateY(0.45px)">-53241.7</div>
<div style="font-size:17px;line-height:22px;top:34.70px;color:#ffff00;left:5.30px;">1 Spec</div><div style="font-size:17px;line-height:22px;top:34.70px;color:#f0f0f0;left:85.00px;">M1</div><div style="font-size:17px;line-height:22px;top:34.70px;color:#f0f0f0;left:117.50px;">Выкл</div><div style="font-size:17px;line-height:22px;top:34.70px;color:#ffff00;left:452.30px;">2 Wav</div><div style="font-size:17px;line-height:22px;top:34.70px;color:#f0f0f0;left:532.00px;">M1</div><div style="font-size:17px;line-height:22px;top:34.70px;color:#f0f0f0;left:564.50px;">Выкл</div><div style="font-size:17px;line-height:22px;top:308.50px;color:#ffff00;left:5.30px;">3 Imag</div><div style="font-size:17px;line-height:22px;top:308.50px;color:#f0f0f0;left:85.00px;">M1</div><div style="font-size:17px;line-height:22px;top:308.50px;color:#f0f0f0;left:117.50px;">Выкл</div><div style="font-size:17px;line-height:22px;top:308.50px;color:#000;left:452.30px;">4 Real</div><div style="font-size:17px;line-height:22px;top:308.50px;color:#f0f0f0;left:532.00px;">M1</div><div style="font-size:17px;line-height:22px;top:308.50px;color:#f0f0f0;left:564.50px;">Выкл</div><div style="font-size:17px;line-height:22px;top:261.50px;color:#f0f0f0;left:3.90px;">Центр: 2 ГГц</div><div style="font-size:17px;line-height:22px;top:261.50px;color:#e0c020;left:149.60px;">1:И</div><div style="font-size:17px;line-height:22px;top:261.50px;color:#f07010;left:185.60px;">2:М</div><div style="font-size:17px;line-height:22px;top:261.50px;color:#2a90e0;left:222.20px;">3:-</div><div style="font-size:17px;line-height:22px;top:261.50px;color:#20c050;left:259.00px;">4:-</div><div style="font-size:17px;line-height:22px;top:261.50px;color:#f0f0f0;left:40.30px;width:400px;text-align:right;">Полоса: 10 МГц</div><div style="font-size:17px;line-height:22px;top:282.70px;color:#f0f0f0;left:3.90px;">Полоса разр.: 19.569 кГц</div><div style="font-size:17px;line-height:22px;top:282.70px;color:#f0f0f0;left:40.30px;width:400px;text-align:right;">Время анализа: 1 мс</div><div style="font-size:17px;line-height:22px;top:261.50px;color:#f0f0f0;left:450.90px;">Старт: 0 с</div><div style="font-size:17px;line-height:22px;top:261.50px;color:#e0c020;left:596.60px;">1:И</div><div style="font-size:17px;line-height:22px;top:261.50px;color:#f07010;left:632.60px;">2:-</div><div style="font-size:17px;line-height:22px;top:261.50px;color:#2a90e0;left:669.20px;">3:-</div><div style="font-size:17px;line-height:22px;top:261.50px;color:#20c050;left:706.00px;">4:-</div><div style="font-size:17px;line-height:22px;top:261.50px;color:#f0f0f0;left:487.00px;width:400px;text-align:right;">Стоп: 80 мкс</div><div style="font-size:17px;line-height:22px;top:282.70px;color:#f0f0f0;left:450.90px;">ФПЧ: 10 МГц</div><div style="font-size:17px;line-height:22px;top:282.70px;color:#f0f0f0;left:487.00px;width:400px;text-align:right;">Период дискрет.: 80 нс</div><div style="font-size:17px;line-height:22px;top:534.40px;color:#f0f0f0;left:3.90px;">Старт: 0 с</div><div style="font-size:17px;line-height:22px;top:534.40px;color:#f0f0f0;left:40.00px;width:400px;text-align:right;">Стоп: 80 мкс</div><div style="font-size:17px;line-height:22px;top:555.60px;color:#f0f0f0;left:3.90px;">ФПЧ: 10 МГц</div><div style="font-size:17px;line-height:22px;top:555.60px;color:#f0f0f0;left:40.00px;width:400px;text-align:right;">Период дискрет.: 80 нс</div><div style="font-size:17px;line-height:22px;top:534.40px;color:#f0f0f0;left:450.90px;">Старт: 0 с</div><div style="font-size:17px;line-height:22px;top:534.40px;color:#f0f0f0;left:487.00px;width:400px;text-align:right;">Стоп: 80 мкс</div><div style="font-size:17px;line-height:22px;top:555.60px;color:#f0f0f0;left:450.90px;">ФПЧ: 10 МГц</div><div style="font-size:17px;line-height:22px;top:555.60px;color:#f0f0f0;left:487.00px;width:400px;text-align:right;">Период дискрет.: 80 нс</div>
<div class="sb" style="top:32.3px"></div><div style="font-size:19.75px;line-height:26px;top:39.20px;color:#000;font-weight:bold;left:807.70px;width:300px;text-align:center;">Оп. уровень</div><div style="font-size:19.75px;line-height:26px;top:66.65px;color:#3c3c3c;left:807.70px;width:300px;text-align:center;">10 дБм</div><div class="sb" style="top:100.3px"></div><div style="font-size:19.75px;line-height:26px;top:108.80px;color:#000;font-weight:bold;left:807.70px;width:300px;text-align:center;">Авто</div><div style="font-size:19.75px;line-height:26px;top:131.10px;color:#000;font-weight:bold;left:807.70px;width:300px;text-align:center;">масштаб</div><div class="sb" style="top:168.3px"></div><div style="font-size:19.75px;line-height:26px;top:175.20px;color:#000;font-weight:bold;left:807.70px;width:300px;text-align:center;">Полоса разр.</div><div style="font-size:19.75px;line-height:26px;top:202.65px;color:#3c3c3c;left:807.70px;width:300px;text-align:center;">19.569 кГц</div><div class="sb" style="top:236.3px"></div><div style="font-size:19.75px;line-height:26px;top:243.20px;color:#000;font-weight:bold;left:807.70px;width:300px;text-align:center;">Цифр. ФПЧ</div><div style="font-size:19.75px;line-height:26px;top:270.65px;color:#3c3c3c;left:807.70px;width:300px;text-align:center;">10 МГц</div><div class="sb" style="top:304.3px"></div><div style="font-size:19.75px;line-height:26px;top:312.80px;color:#000;font-weight:bold;left:807.70px;width:300px;text-align:center;">Пик-&gt;</div><div style="font-size:19.75px;line-height:26px;top:335.10px;color:#000;font-weight:bold;left:807.70px;width:300px;text-align:center;">Центр</div><div class="sb" style="top:372.3px"></div><div style="font-size:19.75px;line-height:26px;top:379.20px;color:#000;font-weight:bold;left:807.70px;width:300px;text-align:center;">Полоса</div><div style="font-size:19.75px;line-height:26px;top:406.65px;color:#3c3c3c;left:807.70px;width:300px;text-align:center;">10 МГц</div><div class="sb" style="top:440.3px"></div><div style="font-size:19.75px;line-height:26px;top:447.20px;color:#000;font-weight:bold;left:807.70px;width:300px;text-align:center;">Центр</div><div style="font-size:19.75px;line-height:26px;top:474.65px;color:#3c3c3c;left:807.70px;width:300px;text-align:center;">2 ГГц</div><div class="sb" style="top:508.3px"></div><div style="font-size:19.75px;line-height:26px;top:515.20px;color:#000;font-weight:bold;left:807.70px;width:300px;text-align:center;">Выборка</div><div style="font-size:19.75px;line-height:26px;top:542.65px;color:#3c3c3c;left:807.70px;width:300px;text-align:center;">512</div>
<div class="bbg"></div><div class="bb" style="left:-0.35px"></div><div class="bb" style="left:170.85px"></div><div class="bb" style="left:342.05px"></div><div class="bb" style="left:513.25px"></div><div class="bb" style="left:684.45px"></div><div class="bb" style="left:855.65px"></div><div style="font-size:19.75px;line-height:26px;top:583.40px;color:#000;font-weight:bold;left:-65.90px;width:300px;text-align:center;">Однократная</div><div style="font-size:19.75px;line-height:26px;top:605.40px;color:#000;font-weight:bold;left:-65.90px;width:300px;text-align:center;">развертка</div><div style="font-size:19.75px;line-height:26px;top:583.60px;color:#000;font-weight:bold;left:105.50px;width:300px;text-align:center;">Непр.развертка</div><div style="font-size:19.75px;line-height:26px;top:605.70px;color:#101010;left:105.20px;width:300px;text-align:center;">Выключена</div>
</div></body></html>
